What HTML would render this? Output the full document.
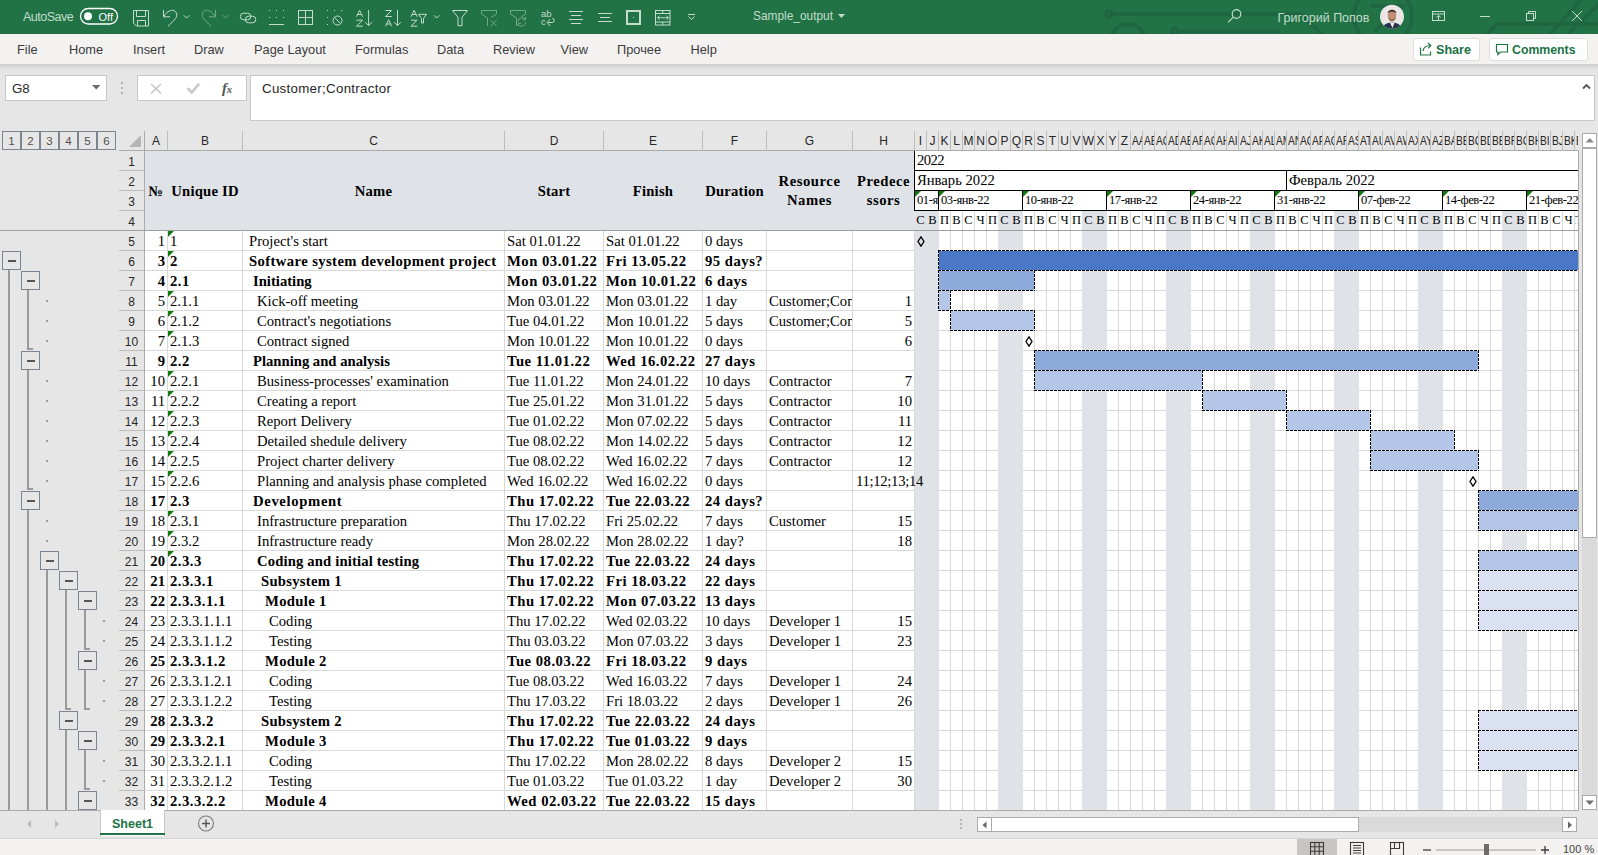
<!DOCTYPE html>
<html><head><meta charset="utf-8"><title>Sample_output - Excel</title>
<style>
html,body{margin:0;padding:0;width:1598px;height:855px;overflow:hidden;background:#e6e6e6;}
body div, body svg{position:absolute;}
.t{white-space:pre;}
</style></head><body>
<div style="left:0px;top:0px;width:1598px;height:34px;background:#217346"></div>
<div style="left:0px;top:34px;width:1598px;height:30px;background:#f3f2f1"></div>
<div style="left:0px;top:64px;width:1598px;height:774px;background:#e6e6e6"></div>
<div style="left:0px;top:64px;width:1598px;height:6px;background:linear-gradient(#cdcdcd,#e6e6e6)"></div>
<div style="left:0px;top:838px;width:1598px;height:17px;background:#f3f2f1;border-top:1px solid #d4d4d4;box-sizing:border-box"></div>
<div class="t" style="left:23px;top:7px;font:12.5px 'Liberation Sans',sans-serif;color:#c0dec9;letter-spacing:-0.5px;line-height:20px;text-align:left">AutoSave</div>
<svg style="position:absolute;left:0;top:0" width="1598" height="34">
<g fill="none" stroke="#1e6540" stroke-width="3.4">
<line x1="1112" y1="14" x2="1290" y2="14"/><circle cx="1109" cy="14" r="3"/>
<circle cx="1128" cy="42" r="18"/>
<circle cx="1175" cy="31.5" r="3"/><line x1="1178" y1="31.5" x2="1280" y2="31.5"/>
<path d="M1290 14 L1300 14 L1322 34"/>
<circle cx="1383" cy="16" r="29"/>
<path d="M1371 6 H1402 L1374 32"/>
<path d="M1497 24 H1598 M1497 24 L1487 34"/>
<line x1="1581" y1="0" x2="1550" y2="34"/><line x1="1600" y1="3" x2="1568" y2="34"/>
</g>
<rect x="80.5" y="8.5" width="37" height="15.5" rx="7.75" fill="none" stroke="#ffffff" stroke-width="1.3"/>
<circle cx="88" cy="16.2" r="4" fill="#ffffff"/>
<g fill="none" stroke="#c3dccb" stroke-width="1">
<!-- save -->
<path d="M133.5 10.5h15v15.5h-12l-3-3z"/><path d="M136.5 10.5v6h9v-6"/><path d="M137.5 26v-5.5h8v5.5"/>
<!-- undo -->
<path d="M163.5 10v6.8h6.5"/><path d="M164 16.5C166 12 170 10.3 172.5 10.3C175 10.3 176.8 12.5 176.8 15C176.8 17.5 175.5 19 168 26.3"/>
<path d="M183.8 15.3l2.7 2.7 2.7-2.7"/>
<!-- link -->
<rect x="240.3" y="13.2" width="10.5" height="6.6" rx="3.3"/><rect x="245.3" y="16.2" width="10.5" height="6.6" rx="3.3"/>
<!-- bottom border -->
<path d="M269 24.5h15"/>
<!-- all borders -->
<rect x="298.5" y="10.5" width="14" height="14"/><path d="M305.5 10.5v14M298.5 17.5h14"/>
<!-- no border -->
<circle cx="337.5" cy="20.5" r="4.5"/><path d="M334.3 17.3l6.4 6.4"/>
<!-- sort AZ -->
<path d="M356.5 16.8L359.6 10.3L362.7 16.8M357.6 14.5h4"/><path d="M356.5 20.2h6L356.5 26.2h6.3"/>
<path d="M368.6 10v15.5M365.2 22.2l3.4 3.4 3.4-3.4"/>
<!-- sort ZA -->
<path d="M385.5 10.5h6L385.5 16.5h6.3"/><path d="M385.5 26.3L388.6 19.8L391.7 26.3M386.6 24h4"/>
<path d="M397.5 10v15.5M394.1 22.2l3.4 3.4 3.4-3.4"/>
<!-- sort filter -->
<path d="M411 16.8L414.1 10.3L417.2 16.8M412.1 14.5h4"/><path d="M411 20.2h6L411 26.2h6.3"/>
<path d="M418.5 14.3h8l-3 4.2v4.5h-2v-4.5z"/>
<path d="M434 15.3l2.7 2.7 2.7-2.7"/>
<!-- filter -->
<path d="M452.5 10.5h15l-5.5 6.8v8.4h-4v-8.4z"/>
<!-- wrap -->
<path d="M548 22.5h4.2a2 2 0 0 0 0-4 M550 26l-2.8-3.5 2.8-3.3" />
<!-- align center -->
<path d="M569 11.5h14M571 15.5h10M569 19.5h14M571 23.5h10"/>
<path d="M598 13.5h14M600 17.5h10M598 21.5h14"/>
<!-- thick box -->
<rect x="627" y="11" width="13" height="13" stroke-width="2"/>
<!-- merge -->
<rect x="655.5" y="10.5" width="14.5" height="14.5"/><path d="M655.5 13.5h14.5M655.5 22h14.5M662.75 10.5v3M662.75 22v3M657.5 17.75h11M659.5 15.7l-2 2.05 2 2.05M666.5 15.7l2 2.05-2 2.05"/>
<path d="M688 14.5h7M688.5 16.5l3 3 3-3"/>
</g>
<g fill="none" stroke="#c3dccb" stroke-width="1" opacity="0.5">
<path d="M215.5 10v6.8h-6.5"/><path d="M215 16.5C213 12 209 10.3 206.5 10.3C204 10.3 202.2 12.5 202.2 15C202.2 17.5 203.5 19 211 26.3"/>
<path d="M222.8 15.3l2.7 2.7 2.7-2.7"/>
<path d="M487.5 26V18L481.5 14V10.5H496.5V14L491 17.5"/><path d="M490.8 20.3l5.7 5.7M496.5 20.3l-5.7 5.7"/>
<path d="M516.5 26V18L510.5 14V10.5H525.5V14L521.5 16.8"/><path d="M518 21.5a4 4 0 0 1 7.3-2M525.5 22.5a4 4 0 0 1-7.3 2M525.5 17v2.7h-2.7M518.2 26v-2.7h2.7"/>
</g>
<g fill="#c3dccb" font-family="Liberation Sans" font-size="9.5">
<text x="541" y="17.3">ab</text><text x="541" y="25.3">c</text>
</g>
<g fill="#c3dccb">
<rect x="269" y="10" width="1" height="1"/><rect x="276" y="10" width="1" height="1"/><rect x="283" y="10" width="1" height="1"/>
<rect x="269" y="17" width="1" height="1"/><rect x="276" y="17" width="1" height="1"/><rect x="283" y="17" width="1" height="1"/>
<rect x="327" y="10" width="1" height="1"/><rect x="334" y="10" width="1" height="1"/><rect x="341" y="10" width="1" height="1"/>
<rect x="327" y="17" width="1" height="1"/><rect x="327" y="24" width="1" height="1"/>
<rect x="633" y="17" width="1" height="1"/>
</g>
<!-- search -->
<g fill="none" stroke="#c3dccb" stroke-width="1.2">
<circle cx="1236.5" cy="14" r="4.3"/><path d="M1233.3 17.2l-5.2 5.2"/>
</g>
<!-- window controls -->
<g fill="none" stroke="#c3dccb" stroke-width="1">
<rect x="1432.5" y="11.5" width="12" height="9"/><path d="M1432.5 14h12M1438.5 20.5v-5M1436.3 17.5l2.2-2.2 2.2 2.2"/>
<path d="M1480 16.5h10"/>
<rect x="1526.5" y="13.5" width="7" height="7"/><path d="M1528.5 13.5v-2h7v7h-2"/>
<path d="M1572 11l10 10M1582 11l-10 10"/>
</g>
<!-- avatar -->
<defs><clipPath id="av"><circle cx="1392" cy="16.8" r="12"/></clipPath></defs>
<circle cx="1392" cy="16.8" r="12" fill="#ebe6e6"/>
<g clip-path="url(#av)">
<path d="M1382 30 C1383 24.5 1386 23 1392 22.5 C1398 23 1401 24.5 1402 30z" fill="#27324d"/>
<path d="M1390 22.8 L1392.5 28 L1394.5 22.8z" fill="#f2f2f2"/>
<ellipse cx="1392" cy="15.8" rx="4.3" ry="6" fill="#c08f78"/>
<path d="M1387.7 13.5 C1387.5 8.5 1396.5 8.5 1396.3 13.5 C1395 11 1389 11 1387.7 13.5z" fill="#4a3426"/>
<path d="M1389 18.5 C1390 20.5 1394 20.5 1395 18.5" fill="none" stroke="#6b4a3a" stroke-width="1"/>
</g>
</svg>
<div class="t" style="left:98.5px;top:6.5px;font:11px 'Liberation Sans',sans-serif;color:#ffffff;line-height:20px;text-align:left">Off</div>
<div class="t" style="left:753px;top:6px;font:11.9px 'Liberation Sans',sans-serif;color:#c3dccb;line-height:20px;text-align:left">Sample_output</div>
<svg style="position:absolute;left:838px;top:14px" width="8" height="5"><path d="M0 0h7l-3.5 4z" fill="#c3dccb"/></svg>
<div class="t" style="left:1277.5px;top:7.5px;font:12.5px 'Liberation Sans',sans-serif;color:#c3dccb;line-height:20px;text-align:left">Григорий Попов</div>
<div class="t" style="left:17px;top:39.5px;font:12.8px 'Liberation Sans',sans-serif;color:#3c3c3c;line-height:20px;text-align:left">File</div>
<div class="t" style="left:69px;top:39.5px;font:12.8px 'Liberation Sans',sans-serif;color:#3c3c3c;line-height:20px;text-align:left">Home</div>
<div class="t" style="left:133px;top:39.5px;font:12.8px 'Liberation Sans',sans-serif;color:#3c3c3c;line-height:20px;text-align:left">Insert</div>
<div class="t" style="left:194px;top:39.5px;font:12.8px 'Liberation Sans',sans-serif;color:#3c3c3c;line-height:20px;text-align:left">Draw</div>
<div class="t" style="left:254px;top:39.5px;font:12.8px 'Liberation Sans',sans-serif;color:#3c3c3c;line-height:20px;text-align:left">Page Layout</div>
<div class="t" style="left:355px;top:39.5px;font:12.8px 'Liberation Sans',sans-serif;color:#3c3c3c;line-height:20px;text-align:left">Formulas</div>
<div class="t" style="left:437px;top:39.5px;font:12.8px 'Liberation Sans',sans-serif;color:#3c3c3c;line-height:20px;text-align:left">Data</div>
<div class="t" style="left:493px;top:39.5px;font:12.8px 'Liberation Sans',sans-serif;color:#3c3c3c;line-height:20px;text-align:left">Review</div>
<div class="t" style="left:560.5px;top:39.5px;font:12.8px 'Liberation Sans',sans-serif;color:#3c3c3c;line-height:20px;text-align:left">View</div>
<div class="t" style="left:617px;top:39.5px;font:12.8px 'Liberation Sans',sans-serif;color:#3c3c3c;line-height:20px;text-align:left">Прочее</div>
<div class="t" style="left:690.5px;top:39.5px;font:12.8px 'Liberation Sans',sans-serif;color:#3c3c3c;line-height:20px;text-align:left">Help</div>
<div style="left:1412.5px;top:38px;width:67px;height:22.5px;background:#fff;border:1px solid #e1dfdd;border-radius:3px;box-sizing:border-box"></div>
<div style="left:1488.5px;top:38px;width:99px;height:22.5px;background:#fff;border:1px solid #e1dfdd;border-radius:3px;box-sizing:border-box"></div>
<svg style="position:absolute;left:1410px;top:36px" width="180" height="26"><g fill="none" stroke="#217346" stroke-width="1.2">
<path d="M10.5 11.5v7.5h10v-3.5"/><path d="M13 15c0.5-3.5 3.2-5.5 7.5-5.5"/><path d="M18 7l2.8 2.5-2.5 2.8"/>
<path d="M86.5 8.5h11v7.5h-7l-2.5 2.5v-2.5h-1.5z"/>
</g></svg>
<div class="t" style="left:1436px;top:39.5px;font:bold 12.6px 'Liberation Sans',sans-serif;color:#217346;line-height:20px;text-align:left">Share</div>
<div class="t" style="left:1512px;top:39.5px;font:bold 12.3px 'Liberation Sans',sans-serif;color:#217346;line-height:20px;text-align:left">Comments</div>
<div style="left:5px;top:75px;width:102px;height:26px;background:#fff;border:1px solid #c8c8c8;box-sizing:border-box"></div>
<div class="t" style="left:12px;top:79px;font:13.3px 'Liberation Sans',sans-serif;color:#262626;line-height:20px;text-align:left">G8</div>
<svg style="position:absolute;left:92px;top:85px" width="10" height="6"><path d="M0 0h8.5l-4.25 4.5z" fill="#6b6b6b"/></svg>
<svg style="position:absolute;left:120px;top:81px" width="4" height="14"><circle cx="2" cy="2" r="1" fill="#a0a0a0"/><circle cx="2" cy="7" r="1" fill="#a0a0a0"/><circle cx="2" cy="12" r="1" fill="#a0a0a0"/></svg>
<div style="left:137px;top:75px;width:110px;height:26px;background:#fff;border:1px solid #c8c8c8;box-sizing:border-box"></div>
<svg style="position:absolute;left:137px;top:75px" width="110" height="26"><g fill="none" stroke="#b4b4b4" stroke-width="1.3">
<path d="M14 9l10 9.5M24 9l-10 9.5" stroke="#c4c4c4" stroke-width="1.4"/><path d="M50.5 13.2l4.2 4.3 7.5-8.8" stroke="#c8c8c8" stroke-width="2.6"/></g>
<text x="85" y="17.8" font-family="Liberation Serif" font-style="italic" font-weight="bold" font-size="15" fill="#555">f</text><text x="89.8" y="17.8" font-family="Liberation Serif" font-style="italic" font-size="10.5" font-weight="bold" fill="#555">x</text></svg>
<div style="left:250px;top:75px;width:1345px;height:46px;background:#fff;border:1px solid #c8c8c8;box-sizing:border-box"></div>
<div class="t" style="left:262px;top:79px;font:13.3px 'Liberation Sans',sans-serif;color:#262626;letter-spacing:0.3px;line-height:20px;text-align:left">Customer;Contractor</div>
<svg style="position:absolute;left:1582px;top:83px" width="10" height="7"><path d="M1 5.5l3.5-3.5 3.5 3.5" fill="none" stroke="#555" stroke-width="1.8"/></svg>
<div style="left:145px;top:151px;width:1433px;height:659px;background:#fff"></div>
<div style="left:145px;top:151px;width:769px;height:79px;background:#dfe3e8"></div>
<div style="left:914px;top:211px;width:25px;height:599px;background:#dfe3e8"></div>
<div style="left:998px;top:211px;width:25px;height:599px;background:#dfe3e8"></div>
<div style="left:1082px;top:211px;width:25px;height:599px;background:#dfe3e8"></div>
<div style="left:1166px;top:211px;width:25px;height:599px;background:#dfe3e8"></div>
<div style="left:1250px;top:211px;width:25px;height:599px;background:#dfe3e8"></div>
<div style="left:1334px;top:211px;width:25px;height:599px;background:#dfe3e8"></div>
<div style="left:1418px;top:211px;width:25px;height:599px;background:#dfe3e8"></div>
<div style="left:1502px;top:211px;width:25px;height:599px;background:#dfe3e8"></div>
<div style="left:950px;top:211px;width:1px;height:599px;background:#d9d9d9"></div>
<div style="left:962px;top:211px;width:1px;height:599px;background:#d9d9d9"></div>
<div style="left:974px;top:211px;width:1px;height:599px;background:#d9d9d9"></div>
<div style="left:986px;top:211px;width:1px;height:599px;background:#d9d9d9"></div>
<div style="left:1034px;top:211px;width:1px;height:599px;background:#d9d9d9"></div>
<div style="left:1046px;top:211px;width:1px;height:599px;background:#d9d9d9"></div>
<div style="left:1058px;top:211px;width:1px;height:599px;background:#d9d9d9"></div>
<div style="left:1070px;top:211px;width:1px;height:599px;background:#d9d9d9"></div>
<div style="left:1118px;top:211px;width:1px;height:599px;background:#d9d9d9"></div>
<div style="left:1130px;top:211px;width:1px;height:599px;background:#d9d9d9"></div>
<div style="left:1142px;top:211px;width:1px;height:599px;background:#d9d9d9"></div>
<div style="left:1154px;top:211px;width:1px;height:599px;background:#d9d9d9"></div>
<div style="left:1202px;top:211px;width:1px;height:599px;background:#d9d9d9"></div>
<div style="left:1214px;top:211px;width:1px;height:599px;background:#d9d9d9"></div>
<div style="left:1226px;top:211px;width:1px;height:599px;background:#d9d9d9"></div>
<div style="left:1238px;top:211px;width:1px;height:599px;background:#d9d9d9"></div>
<div style="left:1286px;top:211px;width:1px;height:599px;background:#d9d9d9"></div>
<div style="left:1298px;top:211px;width:1px;height:599px;background:#d9d9d9"></div>
<div style="left:1310px;top:211px;width:1px;height:599px;background:#d9d9d9"></div>
<div style="left:1322px;top:211px;width:1px;height:599px;background:#d9d9d9"></div>
<div style="left:1370px;top:211px;width:1px;height:599px;background:#d9d9d9"></div>
<div style="left:1382px;top:211px;width:1px;height:599px;background:#d9d9d9"></div>
<div style="left:1394px;top:211px;width:1px;height:599px;background:#d9d9d9"></div>
<div style="left:1406px;top:211px;width:1px;height:599px;background:#d9d9d9"></div>
<div style="left:1454px;top:211px;width:1px;height:599px;background:#d9d9d9"></div>
<div style="left:1466px;top:211px;width:1px;height:599px;background:#d9d9d9"></div>
<div style="left:1478px;top:211px;width:1px;height:599px;background:#d9d9d9"></div>
<div style="left:1490px;top:211px;width:1px;height:599px;background:#d9d9d9"></div>
<div style="left:1538px;top:211px;width:1px;height:599px;background:#d9d9d9"></div>
<div style="left:1550px;top:211px;width:1px;height:599px;background:#d9d9d9"></div>
<div style="left:1562px;top:211px;width:1px;height:599px;background:#d9d9d9"></div>
<div style="left:1574px;top:211px;width:1px;height:599px;background:#d9d9d9"></div>
<div style="left:145px;top:250px;width:1433px;height:1px;background:#d9d9d9"></div>
<div style="left:145px;top:270px;width:1433px;height:1px;background:#d9d9d9"></div>
<div style="left:145px;top:290px;width:1433px;height:1px;background:#d9d9d9"></div>
<div style="left:145px;top:310px;width:1433px;height:1px;background:#d9d9d9"></div>
<div style="left:145px;top:330px;width:1433px;height:1px;background:#d9d9d9"></div>
<div style="left:145px;top:350px;width:1433px;height:1px;background:#d9d9d9"></div>
<div style="left:145px;top:370px;width:1433px;height:1px;background:#d9d9d9"></div>
<div style="left:145px;top:390px;width:1433px;height:1px;background:#d9d9d9"></div>
<div style="left:145px;top:410px;width:1433px;height:1px;background:#d9d9d9"></div>
<div style="left:145px;top:430px;width:1433px;height:1px;background:#d9d9d9"></div>
<div style="left:145px;top:450px;width:1433px;height:1px;background:#d9d9d9"></div>
<div style="left:145px;top:470px;width:1433px;height:1px;background:#d9d9d9"></div>
<div style="left:145px;top:490px;width:1433px;height:1px;background:#d9d9d9"></div>
<div style="left:145px;top:510px;width:1433px;height:1px;background:#d9d9d9"></div>
<div style="left:145px;top:530px;width:1433px;height:1px;background:#d9d9d9"></div>
<div style="left:145px;top:550px;width:1433px;height:1px;background:#d9d9d9"></div>
<div style="left:145px;top:570px;width:1433px;height:1px;background:#d9d9d9"></div>
<div style="left:145px;top:590px;width:1433px;height:1px;background:#d9d9d9"></div>
<div style="left:145px;top:610px;width:1433px;height:1px;background:#d9d9d9"></div>
<div style="left:145px;top:630px;width:1433px;height:1px;background:#d9d9d9"></div>
<div style="left:145px;top:650px;width:1433px;height:1px;background:#d9d9d9"></div>
<div style="left:145px;top:670px;width:1433px;height:1px;background:#d9d9d9"></div>
<div style="left:145px;top:690px;width:1433px;height:1px;background:#d9d9d9"></div>
<div style="left:145px;top:710px;width:1433px;height:1px;background:#d9d9d9"></div>
<div style="left:145px;top:730px;width:1433px;height:1px;background:#d9d9d9"></div>
<div style="left:145px;top:750px;width:1433px;height:1px;background:#d9d9d9"></div>
<div style="left:145px;top:770px;width:1433px;height:1px;background:#d9d9d9"></div>
<div style="left:145px;top:790px;width:1433px;height:1px;background:#d9d9d9"></div>
<div style="left:914px;top:211px;width:25px;height:599px;background:#dfe3e8"></div>
<div style="left:998px;top:211px;width:25px;height:599px;background:#dfe3e8"></div>
<div style="left:1082px;top:211px;width:25px;height:599px;background:#dfe3e8"></div>
<div style="left:1166px;top:211px;width:25px;height:599px;background:#dfe3e8"></div>
<div style="left:1250px;top:211px;width:25px;height:599px;background:#dfe3e8"></div>
<div style="left:1334px;top:211px;width:25px;height:599px;background:#dfe3e8"></div>
<div style="left:1418px;top:211px;width:25px;height:599px;background:#dfe3e8"></div>
<div style="left:1502px;top:211px;width:25px;height:599px;background:#dfe3e8"></div>
<div style="left:167px;top:231px;width:1px;height:579px;background:#d9d9d9"></div>
<div style="left:242px;top:231px;width:1px;height:579px;background:#d9d9d9"></div>
<div style="left:504px;top:231px;width:1px;height:579px;background:#d9d9d9"></div>
<div style="left:603px;top:231px;width:1px;height:579px;background:#d9d9d9"></div>
<div style="left:702px;top:231px;width:1px;height:579px;background:#d9d9d9"></div>
<div style="left:766px;top:231px;width:1px;height:579px;background:#d9d9d9"></div>
<div style="left:852px;top:231px;width:1px;height:579px;background:#d9d9d9"></div>
<div style="left:914px;top:231px;width:1px;height:579px;background:#d9d9d9"></div>
<div style="left:119px;top:131px;width:1459px;height:20px;background:#e6e6e6"></div>
<div style="left:119px;top:150px;width:1459px;height:1px;background:#ababab"></div>
<div style="left:144px;top:131px;width:1px;height:19px;background:#bdbdbd"></div>
<div style="left:167px;top:131px;width:1px;height:19px;background:#bdbdbd"></div>
<div style="left:242px;top:131px;width:1px;height:19px;background:#bdbdbd"></div>
<div style="left:504px;top:131px;width:1px;height:19px;background:#bdbdbd"></div>
<div style="left:603px;top:131px;width:1px;height:19px;background:#bdbdbd"></div>
<div style="left:702px;top:131px;width:1px;height:19px;background:#bdbdbd"></div>
<div style="left:766px;top:131px;width:1px;height:19px;background:#bdbdbd"></div>
<div style="left:852px;top:131px;width:1px;height:19px;background:#bdbdbd"></div>
<div style="left:914px;top:131px;width:1px;height:19px;background:#bdbdbd"></div>
<div style="left:926px;top:131px;width:1px;height:19px;background:#bdbdbd"></div>
<div style="left:938px;top:131px;width:1px;height:19px;background:#bdbdbd"></div>
<div style="left:950px;top:131px;width:1px;height:19px;background:#bdbdbd"></div>
<div style="left:962px;top:131px;width:1px;height:19px;background:#bdbdbd"></div>
<div style="left:974px;top:131px;width:1px;height:19px;background:#bdbdbd"></div>
<div style="left:986px;top:131px;width:1px;height:19px;background:#bdbdbd"></div>
<div style="left:998px;top:131px;width:1px;height:19px;background:#bdbdbd"></div>
<div style="left:1010px;top:131px;width:1px;height:19px;background:#bdbdbd"></div>
<div style="left:1022px;top:131px;width:1px;height:19px;background:#bdbdbd"></div>
<div style="left:1034px;top:131px;width:1px;height:19px;background:#bdbdbd"></div>
<div style="left:1046px;top:131px;width:1px;height:19px;background:#bdbdbd"></div>
<div style="left:1058px;top:131px;width:1px;height:19px;background:#bdbdbd"></div>
<div style="left:1070px;top:131px;width:1px;height:19px;background:#bdbdbd"></div>
<div style="left:1082px;top:131px;width:1px;height:19px;background:#bdbdbd"></div>
<div style="left:1094px;top:131px;width:1px;height:19px;background:#bdbdbd"></div>
<div style="left:1106px;top:131px;width:1px;height:19px;background:#bdbdbd"></div>
<div style="left:1118px;top:131px;width:1px;height:19px;background:#bdbdbd"></div>
<div style="left:1130px;top:131px;width:1px;height:19px;background:#bdbdbd"></div>
<div style="left:1142px;top:131px;width:1px;height:19px;background:#bdbdbd"></div>
<div style="left:1154px;top:131px;width:1px;height:19px;background:#bdbdbd"></div>
<div style="left:1166px;top:131px;width:1px;height:19px;background:#bdbdbd"></div>
<div style="left:1178px;top:131px;width:1px;height:19px;background:#bdbdbd"></div>
<div style="left:1190px;top:131px;width:1px;height:19px;background:#bdbdbd"></div>
<div style="left:1202px;top:131px;width:1px;height:19px;background:#bdbdbd"></div>
<div style="left:1214px;top:131px;width:1px;height:19px;background:#bdbdbd"></div>
<div style="left:1226px;top:131px;width:1px;height:19px;background:#bdbdbd"></div>
<div style="left:1238px;top:131px;width:1px;height:19px;background:#bdbdbd"></div>
<div style="left:1250px;top:131px;width:1px;height:19px;background:#bdbdbd"></div>
<div style="left:1262px;top:131px;width:1px;height:19px;background:#bdbdbd"></div>
<div style="left:1274px;top:131px;width:1px;height:19px;background:#bdbdbd"></div>
<div style="left:1286px;top:131px;width:1px;height:19px;background:#bdbdbd"></div>
<div style="left:1298px;top:131px;width:1px;height:19px;background:#bdbdbd"></div>
<div style="left:1310px;top:131px;width:1px;height:19px;background:#bdbdbd"></div>
<div style="left:1322px;top:131px;width:1px;height:19px;background:#bdbdbd"></div>
<div style="left:1334px;top:131px;width:1px;height:19px;background:#bdbdbd"></div>
<div style="left:1346px;top:131px;width:1px;height:19px;background:#bdbdbd"></div>
<div style="left:1358px;top:131px;width:1px;height:19px;background:#bdbdbd"></div>
<div style="left:1370px;top:131px;width:1px;height:19px;background:#bdbdbd"></div>
<div style="left:1382px;top:131px;width:1px;height:19px;background:#bdbdbd"></div>
<div style="left:1394px;top:131px;width:1px;height:19px;background:#bdbdbd"></div>
<div style="left:1406px;top:131px;width:1px;height:19px;background:#bdbdbd"></div>
<div style="left:1418px;top:131px;width:1px;height:19px;background:#bdbdbd"></div>
<div style="left:1430px;top:131px;width:1px;height:19px;background:#bdbdbd"></div>
<div style="left:1442px;top:131px;width:1px;height:19px;background:#bdbdbd"></div>
<div style="left:1454px;top:131px;width:1px;height:19px;background:#bdbdbd"></div>
<div style="left:1466px;top:131px;width:1px;height:19px;background:#bdbdbd"></div>
<div style="left:1478px;top:131px;width:1px;height:19px;background:#bdbdbd"></div>
<div style="left:1490px;top:131px;width:1px;height:19px;background:#bdbdbd"></div>
<div style="left:1502px;top:131px;width:1px;height:19px;background:#bdbdbd"></div>
<div style="left:1514px;top:131px;width:1px;height:19px;background:#bdbdbd"></div>
<div style="left:1526px;top:131px;width:1px;height:19px;background:#bdbdbd"></div>
<div style="left:1538px;top:131px;width:1px;height:19px;background:#bdbdbd"></div>
<div style="left:1550px;top:131px;width:1px;height:19px;background:#bdbdbd"></div>
<div style="left:1562px;top:131px;width:1px;height:19px;background:#bdbdbd"></div>
<div style="left:1574px;top:131px;width:1px;height:19px;background:#bdbdbd"></div>
<svg style="position:absolute;left:128px;top:134px" width="14" height="14"><path d="M13 1V13H1z" fill="#b5b5b5"/></svg>
<div class="t" style="left:145px;top:131px;width:22px;font:12px 'Liberation Sans',sans-serif;color:#262626;line-height:20px;text-align:center">A</div>
<div class="t" style="left:168px;top:131px;width:74px;font:12px 'Liberation Sans',sans-serif;color:#262626;line-height:20px;text-align:center">B</div>
<div class="t" style="left:243px;top:131px;width:261px;font:12px 'Liberation Sans',sans-serif;color:#262626;line-height:20px;text-align:center">C</div>
<div class="t" style="left:505px;top:131px;width:98px;font:12px 'Liberation Sans',sans-serif;color:#262626;line-height:20px;text-align:center">D</div>
<div class="t" style="left:604px;top:131px;width:98px;font:12px 'Liberation Sans',sans-serif;color:#262626;line-height:20px;text-align:center">E</div>
<div class="t" style="left:703px;top:131px;width:63px;font:12px 'Liberation Sans',sans-serif;color:#262626;line-height:20px;text-align:center">F</div>
<div class="t" style="left:767px;top:131px;width:85px;font:12px 'Liberation Sans',sans-serif;color:#262626;line-height:20px;text-align:center">G</div>
<div class="t" style="left:853px;top:131px;width:61px;font:12px 'Liberation Sans',sans-serif;color:#262626;line-height:20px;text-align:center">H</div>
<div class="t" style="left:915px;top:131px;width:11px;height:19px;overflow:hidden;line-height:20px;"><div style="position:absolute;left:50%;transform:translateX(-50%);top:0;font:12px Liberation Sans,sans-serif;line-height:20px;color:#262626;white-space:nowrap">I</div></div>
<div class="t" style="left:927px;top:131px;width:11px;height:19px;overflow:hidden;line-height:20px;"><div style="position:absolute;left:50%;transform:translateX(-50%);top:0;font:12px Liberation Sans,sans-serif;line-height:20px;color:#262626;white-space:nowrap">J</div></div>
<div class="t" style="left:939px;top:131px;width:11px;height:19px;overflow:hidden;line-height:20px;"><div style="position:absolute;left:50%;transform:translateX(-50%);top:0;font:12px Liberation Sans,sans-serif;line-height:20px;color:#262626;white-space:nowrap">K</div></div>
<div class="t" style="left:951px;top:131px;width:11px;height:19px;overflow:hidden;line-height:20px;"><div style="position:absolute;left:50%;transform:translateX(-50%);top:0;font:12px Liberation Sans,sans-serif;line-height:20px;color:#262626;white-space:nowrap">L</div></div>
<div class="t" style="left:963px;top:131px;width:11px;height:19px;overflow:hidden;line-height:20px;"><div style="position:absolute;left:50%;transform:translateX(-50%);top:0;font:12px Liberation Sans,sans-serif;line-height:20px;color:#262626;white-space:nowrap">M</div></div>
<div class="t" style="left:975px;top:131px;width:11px;height:19px;overflow:hidden;line-height:20px;"><div style="position:absolute;left:50%;transform:translateX(-50%);top:0;font:12px Liberation Sans,sans-serif;line-height:20px;color:#262626;white-space:nowrap">N</div></div>
<div class="t" style="left:987px;top:131px;width:11px;height:19px;overflow:hidden;line-height:20px;"><div style="position:absolute;left:50%;transform:translateX(-50%);top:0;font:12px Liberation Sans,sans-serif;line-height:20px;color:#262626;white-space:nowrap">O</div></div>
<div class="t" style="left:999px;top:131px;width:11px;height:19px;overflow:hidden;line-height:20px;"><div style="position:absolute;left:50%;transform:translateX(-50%);top:0;font:12px Liberation Sans,sans-serif;line-height:20px;color:#262626;white-space:nowrap">P</div></div>
<div class="t" style="left:1011px;top:131px;width:11px;height:19px;overflow:hidden;line-height:20px;"><div style="position:absolute;left:50%;transform:translateX(-50%);top:0;font:12px Liberation Sans,sans-serif;line-height:20px;color:#262626;white-space:nowrap">Q</div></div>
<div class="t" style="left:1023px;top:131px;width:11px;height:19px;overflow:hidden;line-height:20px;"><div style="position:absolute;left:50%;transform:translateX(-50%);top:0;font:12px Liberation Sans,sans-serif;line-height:20px;color:#262626;white-space:nowrap">R</div></div>
<div class="t" style="left:1035px;top:131px;width:11px;height:19px;overflow:hidden;line-height:20px;"><div style="position:absolute;left:50%;transform:translateX(-50%);top:0;font:12px Liberation Sans,sans-serif;line-height:20px;color:#262626;white-space:nowrap">S</div></div>
<div class="t" style="left:1047px;top:131px;width:11px;height:19px;overflow:hidden;line-height:20px;"><div style="position:absolute;left:50%;transform:translateX(-50%);top:0;font:12px Liberation Sans,sans-serif;line-height:20px;color:#262626;white-space:nowrap">T</div></div>
<div class="t" style="left:1059px;top:131px;width:11px;height:19px;overflow:hidden;line-height:20px;"><div style="position:absolute;left:50%;transform:translateX(-50%);top:0;font:12px Liberation Sans,sans-serif;line-height:20px;color:#262626;white-space:nowrap">U</div></div>
<div class="t" style="left:1071px;top:131px;width:11px;height:19px;overflow:hidden;line-height:20px;"><div style="position:absolute;left:50%;transform:translateX(-50%);top:0;font:12px Liberation Sans,sans-serif;line-height:20px;color:#262626;white-space:nowrap">V</div></div>
<div class="t" style="left:1083px;top:131px;width:11px;height:19px;overflow:hidden;line-height:20px;"><div style="position:absolute;left:50%;transform:translateX(-50%);top:0;font:12px Liberation Sans,sans-serif;line-height:20px;color:#262626;white-space:nowrap">W</div></div>
<div class="t" style="left:1095px;top:131px;width:11px;height:19px;overflow:hidden;line-height:20px;"><div style="position:absolute;left:50%;transform:translateX(-50%);top:0;font:12px Liberation Sans,sans-serif;line-height:20px;color:#262626;white-space:nowrap">X</div></div>
<div class="t" style="left:1107px;top:131px;width:11px;height:19px;overflow:hidden;line-height:20px;"><div style="position:absolute;left:50%;transform:translateX(-50%);top:0;font:12px Liberation Sans,sans-serif;line-height:20px;color:#262626;white-space:nowrap">Y</div></div>
<div class="t" style="left:1119px;top:131px;width:11px;height:19px;overflow:hidden;line-height:20px;"><div style="position:absolute;left:50%;transform:translateX(-50%);top:0;font:12px Liberation Sans,sans-serif;line-height:20px;color:#262626;white-space:nowrap">Z</div></div>
<div class="t" style="left:1131px;top:131px;width:11px;height:19px;overflow:hidden;line-height:20px;"><div style="position:absolute;left:1px;transform:scaleX(0.85);transform-origin:0 0;top:0;font:12px Liberation Sans,sans-serif;line-height:20px;color:#262626;white-space:nowrap">AA</div></div>
<div class="t" style="left:1143px;top:131px;width:11px;height:19px;overflow:hidden;line-height:20px;"><div style="position:absolute;left:1px;transform:scaleX(0.85);transform-origin:0 0;top:0;font:12px Liberation Sans,sans-serif;line-height:20px;color:#262626;white-space:nowrap">AB</div></div>
<div class="t" style="left:1155px;top:131px;width:11px;height:19px;overflow:hidden;line-height:20px;"><div style="position:absolute;left:1px;transform:scaleX(0.85);transform-origin:0 0;top:0;font:12px Liberation Sans,sans-serif;line-height:20px;color:#262626;white-space:nowrap">AC</div></div>
<div class="t" style="left:1167px;top:131px;width:11px;height:19px;overflow:hidden;line-height:20px;"><div style="position:absolute;left:1px;transform:scaleX(0.85);transform-origin:0 0;top:0;font:12px Liberation Sans,sans-serif;line-height:20px;color:#262626;white-space:nowrap">AD</div></div>
<div class="t" style="left:1179px;top:131px;width:11px;height:19px;overflow:hidden;line-height:20px;"><div style="position:absolute;left:1px;transform:scaleX(0.85);transform-origin:0 0;top:0;font:12px Liberation Sans,sans-serif;line-height:20px;color:#262626;white-space:nowrap">AE</div></div>
<div class="t" style="left:1191px;top:131px;width:11px;height:19px;overflow:hidden;line-height:20px;"><div style="position:absolute;left:1px;transform:scaleX(0.85);transform-origin:0 0;top:0;font:12px Liberation Sans,sans-serif;line-height:20px;color:#262626;white-space:nowrap">AF</div></div>
<div class="t" style="left:1203px;top:131px;width:11px;height:19px;overflow:hidden;line-height:20px;"><div style="position:absolute;left:1px;transform:scaleX(0.85);transform-origin:0 0;top:0;font:12px Liberation Sans,sans-serif;line-height:20px;color:#262626;white-space:nowrap">AG</div></div>
<div class="t" style="left:1215px;top:131px;width:11px;height:19px;overflow:hidden;line-height:20px;"><div style="position:absolute;left:1px;transform:scaleX(0.85);transform-origin:0 0;top:0;font:12px Liberation Sans,sans-serif;line-height:20px;color:#262626;white-space:nowrap">AH</div></div>
<div class="t" style="left:1227px;top:131px;width:11px;height:19px;overflow:hidden;line-height:20px;"><div style="position:absolute;left:1px;transform:scaleX(0.85);transform-origin:0 0;top:0;font:12px Liberation Sans,sans-serif;line-height:20px;color:#262626;white-space:nowrap">AI</div></div>
<div class="t" style="left:1239px;top:131px;width:11px;height:19px;overflow:hidden;line-height:20px;"><div style="position:absolute;left:1px;transform:scaleX(0.85);transform-origin:0 0;top:0;font:12px Liberation Sans,sans-serif;line-height:20px;color:#262626;white-space:nowrap">AJ</div></div>
<div class="t" style="left:1251px;top:131px;width:11px;height:19px;overflow:hidden;line-height:20px;"><div style="position:absolute;left:1px;transform:scaleX(0.85);transform-origin:0 0;top:0;font:12px Liberation Sans,sans-serif;line-height:20px;color:#262626;white-space:nowrap">AK</div></div>
<div class="t" style="left:1263px;top:131px;width:11px;height:19px;overflow:hidden;line-height:20px;"><div style="position:absolute;left:1px;transform:scaleX(0.85);transform-origin:0 0;top:0;font:12px Liberation Sans,sans-serif;line-height:20px;color:#262626;white-space:nowrap">AL</div></div>
<div class="t" style="left:1275px;top:131px;width:11px;height:19px;overflow:hidden;line-height:20px;"><div style="position:absolute;left:1px;transform:scaleX(0.85);transform-origin:0 0;top:0;font:12px Liberation Sans,sans-serif;line-height:20px;color:#262626;white-space:nowrap">AM</div></div>
<div class="t" style="left:1287px;top:131px;width:11px;height:19px;overflow:hidden;line-height:20px;"><div style="position:absolute;left:1px;transform:scaleX(0.85);transform-origin:0 0;top:0;font:12px Liberation Sans,sans-serif;line-height:20px;color:#262626;white-space:nowrap">AN</div></div>
<div class="t" style="left:1299px;top:131px;width:11px;height:19px;overflow:hidden;line-height:20px;"><div style="position:absolute;left:1px;transform:scaleX(0.85);transform-origin:0 0;top:0;font:12px Liberation Sans,sans-serif;line-height:20px;color:#262626;white-space:nowrap">AO</div></div>
<div class="t" style="left:1311px;top:131px;width:11px;height:19px;overflow:hidden;line-height:20px;"><div style="position:absolute;left:1px;transform:scaleX(0.85);transform-origin:0 0;top:0;font:12px Liberation Sans,sans-serif;line-height:20px;color:#262626;white-space:nowrap">AP</div></div>
<div class="t" style="left:1323px;top:131px;width:11px;height:19px;overflow:hidden;line-height:20px;"><div style="position:absolute;left:1px;transform:scaleX(0.85);transform-origin:0 0;top:0;font:12px Liberation Sans,sans-serif;line-height:20px;color:#262626;white-space:nowrap">AQ</div></div>
<div class="t" style="left:1335px;top:131px;width:11px;height:19px;overflow:hidden;line-height:20px;"><div style="position:absolute;left:1px;transform:scaleX(0.85);transform-origin:0 0;top:0;font:12px Liberation Sans,sans-serif;line-height:20px;color:#262626;white-space:nowrap">AR</div></div>
<div class="t" style="left:1347px;top:131px;width:11px;height:19px;overflow:hidden;line-height:20px;"><div style="position:absolute;left:1px;transform:scaleX(0.85);transform-origin:0 0;top:0;font:12px Liberation Sans,sans-serif;line-height:20px;color:#262626;white-space:nowrap">AS</div></div>
<div class="t" style="left:1359px;top:131px;width:11px;height:19px;overflow:hidden;line-height:20px;"><div style="position:absolute;left:1px;transform:scaleX(0.85);transform-origin:0 0;top:0;font:12px Liberation Sans,sans-serif;line-height:20px;color:#262626;white-space:nowrap">AT</div></div>
<div class="t" style="left:1371px;top:131px;width:11px;height:19px;overflow:hidden;line-height:20px;"><div style="position:absolute;left:1px;transform:scaleX(0.85);transform-origin:0 0;top:0;font:12px Liberation Sans,sans-serif;line-height:20px;color:#262626;white-space:nowrap">AU</div></div>
<div class="t" style="left:1383px;top:131px;width:11px;height:19px;overflow:hidden;line-height:20px;"><div style="position:absolute;left:1px;transform:scaleX(0.85);transform-origin:0 0;top:0;font:12px Liberation Sans,sans-serif;line-height:20px;color:#262626;white-space:nowrap">AV</div></div>
<div class="t" style="left:1395px;top:131px;width:11px;height:19px;overflow:hidden;line-height:20px;"><div style="position:absolute;left:1px;transform:scaleX(0.85);transform-origin:0 0;top:0;font:12px Liberation Sans,sans-serif;line-height:20px;color:#262626;white-space:nowrap">AW</div></div>
<div class="t" style="left:1407px;top:131px;width:11px;height:19px;overflow:hidden;line-height:20px;"><div style="position:absolute;left:1px;transform:scaleX(0.85);transform-origin:0 0;top:0;font:12px Liberation Sans,sans-serif;line-height:20px;color:#262626;white-space:nowrap">AX</div></div>
<div class="t" style="left:1419px;top:131px;width:11px;height:19px;overflow:hidden;line-height:20px;"><div style="position:absolute;left:1px;transform:scaleX(0.85);transform-origin:0 0;top:0;font:12px Liberation Sans,sans-serif;line-height:20px;color:#262626;white-space:nowrap">AY</div></div>
<div class="t" style="left:1431px;top:131px;width:11px;height:19px;overflow:hidden;line-height:20px;"><div style="position:absolute;left:1px;transform:scaleX(0.85);transform-origin:0 0;top:0;font:12px Liberation Sans,sans-serif;line-height:20px;color:#262626;white-space:nowrap">AZ</div></div>
<div class="t" style="left:1443px;top:131px;width:11px;height:19px;overflow:hidden;line-height:20px;"><div style="position:absolute;left:1px;transform:scaleX(0.85);transform-origin:0 0;top:0;font:12px Liberation Sans,sans-serif;line-height:20px;color:#262626;white-space:nowrap">BA</div></div>
<div class="t" style="left:1455px;top:131px;width:11px;height:19px;overflow:hidden;line-height:20px;"><div style="position:absolute;left:1px;transform:scaleX(0.85);transform-origin:0 0;top:0;font:12px Liberation Sans,sans-serif;line-height:20px;color:#262626;white-space:nowrap">BB</div></div>
<div class="t" style="left:1467px;top:131px;width:11px;height:19px;overflow:hidden;line-height:20px;"><div style="position:absolute;left:1px;transform:scaleX(0.85);transform-origin:0 0;top:0;font:12px Liberation Sans,sans-serif;line-height:20px;color:#262626;white-space:nowrap">BC</div></div>
<div class="t" style="left:1479px;top:131px;width:11px;height:19px;overflow:hidden;line-height:20px;"><div style="position:absolute;left:1px;transform:scaleX(0.85);transform-origin:0 0;top:0;font:12px Liberation Sans,sans-serif;line-height:20px;color:#262626;white-space:nowrap">BD</div></div>
<div class="t" style="left:1491px;top:131px;width:11px;height:19px;overflow:hidden;line-height:20px;"><div style="position:absolute;left:1px;transform:scaleX(0.85);transform-origin:0 0;top:0;font:12px Liberation Sans,sans-serif;line-height:20px;color:#262626;white-space:nowrap">BE</div></div>
<div class="t" style="left:1503px;top:131px;width:11px;height:19px;overflow:hidden;line-height:20px;"><div style="position:absolute;left:1px;transform:scaleX(0.85);transform-origin:0 0;top:0;font:12px Liberation Sans,sans-serif;line-height:20px;color:#262626;white-space:nowrap">BF</div></div>
<div class="t" style="left:1515px;top:131px;width:11px;height:19px;overflow:hidden;line-height:20px;"><div style="position:absolute;left:1px;transform:scaleX(0.85);transform-origin:0 0;top:0;font:12px Liberation Sans,sans-serif;line-height:20px;color:#262626;white-space:nowrap">BG</div></div>
<div class="t" style="left:1527px;top:131px;width:11px;height:19px;overflow:hidden;line-height:20px;"><div style="position:absolute;left:1px;transform:scaleX(0.85);transform-origin:0 0;top:0;font:12px Liberation Sans,sans-serif;line-height:20px;color:#262626;white-space:nowrap">BH</div></div>
<div class="t" style="left:1539px;top:131px;width:11px;height:19px;overflow:hidden;line-height:20px;"><div style="position:absolute;left:1px;transform:scaleX(0.85);transform-origin:0 0;top:0;font:12px Liberation Sans,sans-serif;line-height:20px;color:#262626;white-space:nowrap">BI</div></div>
<div class="t" style="left:1551px;top:131px;width:11px;height:19px;overflow:hidden;line-height:20px;"><div style="position:absolute;left:1px;transform:scaleX(0.85);transform-origin:0 0;top:0;font:12px Liberation Sans,sans-serif;line-height:20px;color:#262626;white-space:nowrap">BJ</div></div>
<div class="t" style="left:1563px;top:131px;width:11px;height:19px;overflow:hidden;line-height:20px;"><div style="position:absolute;left:1px;transform:scaleX(0.85);transform-origin:0 0;top:0;font:12px Liberation Sans,sans-serif;line-height:20px;color:#262626;white-space:nowrap">BK</div></div>
<div class="t" style="left:1575px;top:131px;width:3px;height:19px;overflow:hidden;line-height:20px;"><div style="position:absolute;left:1px;transform:scaleX(0.85);transform-origin:0 0;top:0;font:12px Liberation Sans,sans-serif;line-height:20px;color:#262626;white-space:nowrap">BL</div></div>
<div style="left:119px;top:151px;width:26px;height:659px;background:#e6e6e6"></div>
<div style="left:144px;top:131px;width:1px;height:679px;background:#ababab"></div>
<div style="left:119px;top:170px;width:25px;height:1px;background:#bdbdbd"></div>
<div class="t" style="left:119px;top:152px;width:25px;font:12px 'Liberation Sans',sans-serif;color:#262626;line-height:20px;text-align:center">1</div>
<div style="left:119px;top:190px;width:25px;height:1px;background:#bdbdbd"></div>
<div class="t" style="left:119px;top:172px;width:25px;font:12px 'Liberation Sans',sans-serif;color:#262626;line-height:20px;text-align:center">2</div>
<div style="left:119px;top:210px;width:25px;height:1px;background:#bdbdbd"></div>
<div class="t" style="left:119px;top:192px;width:25px;font:12px 'Liberation Sans',sans-serif;color:#262626;line-height:20px;text-align:center">3</div>
<div class="t" style="left:119px;top:212px;width:25px;font:12px 'Liberation Sans',sans-serif;color:#262626;line-height:20px;text-align:center">4</div>
<div style="left:119px;top:250px;width:25px;height:1px;background:#bdbdbd"></div>
<div class="t" style="left:119px;top:232px;width:25px;font:12px 'Liberation Sans',sans-serif;color:#262626;line-height:20px;text-align:center">5</div>
<div style="left:119px;top:270px;width:25px;height:1px;background:#bdbdbd"></div>
<div class="t" style="left:119px;top:252px;width:25px;font:12px 'Liberation Sans',sans-serif;color:#262626;line-height:20px;text-align:center">6</div>
<div style="left:119px;top:290px;width:25px;height:1px;background:#bdbdbd"></div>
<div class="t" style="left:119px;top:272px;width:25px;font:12px 'Liberation Sans',sans-serif;color:#262626;line-height:20px;text-align:center">7</div>
<div style="left:119px;top:310px;width:25px;height:1px;background:#bdbdbd"></div>
<div class="t" style="left:119px;top:292px;width:25px;font:12px 'Liberation Sans',sans-serif;color:#262626;line-height:20px;text-align:center">8</div>
<div style="left:119px;top:330px;width:25px;height:1px;background:#bdbdbd"></div>
<div class="t" style="left:119px;top:312px;width:25px;font:12px 'Liberation Sans',sans-serif;color:#262626;line-height:20px;text-align:center">9</div>
<div style="left:119px;top:350px;width:25px;height:1px;background:#bdbdbd"></div>
<div class="t" style="left:119px;top:332px;width:25px;font:12px 'Liberation Sans',sans-serif;color:#262626;line-height:20px;text-align:center">10</div>
<div style="left:119px;top:370px;width:25px;height:1px;background:#bdbdbd"></div>
<div class="t" style="left:119px;top:352px;width:25px;font:12px 'Liberation Sans',sans-serif;color:#262626;line-height:20px;text-align:center">11</div>
<div style="left:119px;top:390px;width:25px;height:1px;background:#bdbdbd"></div>
<div class="t" style="left:119px;top:372px;width:25px;font:12px 'Liberation Sans',sans-serif;color:#262626;line-height:20px;text-align:center">12</div>
<div style="left:119px;top:410px;width:25px;height:1px;background:#bdbdbd"></div>
<div class="t" style="left:119px;top:392px;width:25px;font:12px 'Liberation Sans',sans-serif;color:#262626;line-height:20px;text-align:center">13</div>
<div style="left:119px;top:430px;width:25px;height:1px;background:#bdbdbd"></div>
<div class="t" style="left:119px;top:412px;width:25px;font:12px 'Liberation Sans',sans-serif;color:#262626;line-height:20px;text-align:center">14</div>
<div style="left:119px;top:450px;width:25px;height:1px;background:#bdbdbd"></div>
<div class="t" style="left:119px;top:432px;width:25px;font:12px 'Liberation Sans',sans-serif;color:#262626;line-height:20px;text-align:center">15</div>
<div style="left:119px;top:470px;width:25px;height:1px;background:#bdbdbd"></div>
<div class="t" style="left:119px;top:452px;width:25px;font:12px 'Liberation Sans',sans-serif;color:#262626;line-height:20px;text-align:center">16</div>
<div style="left:119px;top:490px;width:25px;height:1px;background:#bdbdbd"></div>
<div class="t" style="left:119px;top:472px;width:25px;font:12px 'Liberation Sans',sans-serif;color:#262626;line-height:20px;text-align:center">17</div>
<div style="left:119px;top:510px;width:25px;height:1px;background:#bdbdbd"></div>
<div class="t" style="left:119px;top:492px;width:25px;font:12px 'Liberation Sans',sans-serif;color:#262626;line-height:20px;text-align:center">18</div>
<div style="left:119px;top:530px;width:25px;height:1px;background:#bdbdbd"></div>
<div class="t" style="left:119px;top:512px;width:25px;font:12px 'Liberation Sans',sans-serif;color:#262626;line-height:20px;text-align:center">19</div>
<div style="left:119px;top:550px;width:25px;height:1px;background:#bdbdbd"></div>
<div class="t" style="left:119px;top:532px;width:25px;font:12px 'Liberation Sans',sans-serif;color:#262626;line-height:20px;text-align:center">20</div>
<div style="left:119px;top:570px;width:25px;height:1px;background:#bdbdbd"></div>
<div class="t" style="left:119px;top:552px;width:25px;font:12px 'Liberation Sans',sans-serif;color:#262626;line-height:20px;text-align:center">21</div>
<div style="left:119px;top:590px;width:25px;height:1px;background:#bdbdbd"></div>
<div class="t" style="left:119px;top:572px;width:25px;font:12px 'Liberation Sans',sans-serif;color:#262626;line-height:20px;text-align:center">22</div>
<div style="left:119px;top:610px;width:25px;height:1px;background:#bdbdbd"></div>
<div class="t" style="left:119px;top:592px;width:25px;font:12px 'Liberation Sans',sans-serif;color:#262626;line-height:20px;text-align:center">23</div>
<div style="left:119px;top:630px;width:25px;height:1px;background:#bdbdbd"></div>
<div class="t" style="left:119px;top:612px;width:25px;font:12px 'Liberation Sans',sans-serif;color:#262626;line-height:20px;text-align:center">24</div>
<div style="left:119px;top:650px;width:25px;height:1px;background:#bdbdbd"></div>
<div class="t" style="left:119px;top:632px;width:25px;font:12px 'Liberation Sans',sans-serif;color:#262626;line-height:20px;text-align:center">25</div>
<div style="left:119px;top:670px;width:25px;height:1px;background:#bdbdbd"></div>
<div class="t" style="left:119px;top:652px;width:25px;font:12px 'Liberation Sans',sans-serif;color:#262626;line-height:20px;text-align:center">26</div>
<div style="left:119px;top:690px;width:25px;height:1px;background:#bdbdbd"></div>
<div class="t" style="left:119px;top:672px;width:25px;font:12px 'Liberation Sans',sans-serif;color:#262626;line-height:20px;text-align:center">27</div>
<div style="left:119px;top:710px;width:25px;height:1px;background:#bdbdbd"></div>
<div class="t" style="left:119px;top:692px;width:25px;font:12px 'Liberation Sans',sans-serif;color:#262626;line-height:20px;text-align:center">28</div>
<div style="left:119px;top:730px;width:25px;height:1px;background:#bdbdbd"></div>
<div class="t" style="left:119px;top:712px;width:25px;font:12px 'Liberation Sans',sans-serif;color:#262626;line-height:20px;text-align:center">29</div>
<div style="left:119px;top:750px;width:25px;height:1px;background:#bdbdbd"></div>
<div class="t" style="left:119px;top:732px;width:25px;font:12px 'Liberation Sans',sans-serif;color:#262626;line-height:20px;text-align:center">30</div>
<div style="left:119px;top:770px;width:25px;height:1px;background:#bdbdbd"></div>
<div class="t" style="left:119px;top:752px;width:25px;font:12px 'Liberation Sans',sans-serif;color:#262626;line-height:20px;text-align:center">31</div>
<div style="left:119px;top:790px;width:25px;height:1px;background:#bdbdbd"></div>
<div class="t" style="left:119px;top:772px;width:25px;font:12px 'Liberation Sans',sans-serif;color:#262626;line-height:20px;text-align:center">32</div>
<div style="left:119px;top:810px;width:25px;height:1px;background:#bdbdbd"></div>
<div class="t" style="left:119px;top:792px;width:25px;font:12px 'Liberation Sans',sans-serif;color:#262626;line-height:20px;text-align:center">33</div>
<div style="left:0px;top:230px;width:1578px;height:1px;background:#9e9e9e"></div>
<div style="left:0px;top:810px;width:1579px;height:1px;background:#ababab"></div>
<div style="left:1578px;top:150px;width:1px;height:661px;background:#ababab"></div>
<div class="t" style="left:145px;top:180.5px;width:22px;font:bold 14.67px 'Liberation Serif',serif;color:#000;letter-spacing:0.2px;line-height:20px;text-align:center">№</div>
<div class="t" style="left:168px;top:180.5px;width:74px;font:bold 14.67px 'Liberation Serif',serif;color:#000;letter-spacing:0.2px;line-height:20px;text-align:center">Unique ID</div>
<div class="t" style="left:243px;top:180.5px;width:261px;font:bold 14.67px 'Liberation Serif',serif;color:#000;letter-spacing:0.2px;line-height:20px;text-align:center">Name</div>
<div class="t" style="left:505px;top:180.5px;width:98px;font:bold 14.67px 'Liberation Serif',serif;color:#000;letter-spacing:0.2px;line-height:20px;text-align:center">Start</div>
<div class="t" style="left:604px;top:180.5px;width:98px;font:bold 14.67px 'Liberation Serif',serif;color:#000;letter-spacing:0.2px;line-height:20px;text-align:center">Finish</div>
<div class="t" style="left:703px;top:180.5px;width:63px;font:bold 14.67px 'Liberation Serif',serif;color:#000;letter-spacing:0.2px;line-height:20px;text-align:center">Duration</div>
<div class="t" style="left:767px;top:171px;width:85px;font:bold 14.67px 'Liberation Serif',serif;color:#000;letter-spacing:0.55px;line-height:20px;text-align:center">Resource</div>
<div class="t" style="left:767px;top:190px;width:85px;font:bold 14.67px 'Liberation Serif',serif;color:#000;letter-spacing:0.55px;line-height:20px;text-align:center">Names</div>
<div class="t" style="left:853px;top:171px;width:61px;font:bold 14.67px 'Liberation Serif',serif;color:#000;letter-spacing:0.55px;line-height:20px;text-align:center">Predece</div>
<div class="t" style="left:853px;top:190px;width:61px;font:bold 14.67px 'Liberation Serif',serif;color:#000;letter-spacing:0.55px;line-height:20px;text-align:center">ssors</div>
<div style="left:914px;top:151px;width:664px;height:60px;background:#fff"></div>
<div style="left:914px;top:151px;width:1px;height:60px;background:#000"></div>
<div style="left:914px;top:170px;width:664px;height:1px;background:#000"></div>
<div style="left:914px;top:190px;width:664px;height:1px;background:#000"></div>
<div style="left:914px;top:210px;width:664px;height:1px;background:#000"></div>
<div class="t" style="left:917px;top:150px;font:14.67px 'Liberation Serif',serif;color:#000;letter-spacing:-0.6px;line-height:20px;text-align:left">2022</div>
<div class="t" style="left:917px;top:170px;font:14.67px 'Liberation Serif',serif;color:#000;line-height:20px;text-align:left">Январь 2022</div>
<div style="left:1286px;top:171px;width:1px;height:20px;background:#000"></div>
<div class="t" style="left:1289px;top:170px;font:14.67px 'Liberation Serif',serif;color:#000;line-height:20px;text-align:left">Февраль 2022</div>
<div style="left:914px;top:191px;width:1px;height:20px;background:#000"></div>
<div class="t" style="left:915px;top:191px;width:23px;height:19px;overflow:hidden;font:12.5px 'Liberation Serif',serif;line-height:19px;letter-spacing:-0.4px;color:#000;padding-left:2px;box-sizing:border-box">01-янв-22</div>
<svg style="position:absolute;left:915px;top:191px" width="6" height="6"><path d="M0 0h6L0 6z" fill="#107c10"/></svg>
<div style="left:938px;top:191px;width:1px;height:20px;background:#000"></div>
<div class="t" style="left:939px;top:191px;width:83px;height:19px;overflow:hidden;font:12.5px 'Liberation Serif',serif;line-height:19px;letter-spacing:-0.4px;color:#000;padding-left:2px;box-sizing:border-box">03-янв-22</div>
<svg style="position:absolute;left:939px;top:191px" width="6" height="6"><path d="M0 0h6L0 6z" fill="#107c10"/></svg>
<div style="left:1022px;top:191px;width:1px;height:20px;background:#000"></div>
<div class="t" style="left:1023px;top:191px;width:83px;height:19px;overflow:hidden;font:12.5px 'Liberation Serif',serif;line-height:19px;letter-spacing:-0.4px;color:#000;padding-left:2px;box-sizing:border-box">10-янв-22</div>
<svg style="position:absolute;left:1023px;top:191px" width="6" height="6"><path d="M0 0h6L0 6z" fill="#107c10"/></svg>
<div style="left:1106px;top:191px;width:1px;height:20px;background:#000"></div>
<div class="t" style="left:1107px;top:191px;width:83px;height:19px;overflow:hidden;font:12.5px 'Liberation Serif',serif;line-height:19px;letter-spacing:-0.4px;color:#000;padding-left:2px;box-sizing:border-box">17-янв-22</div>
<svg style="position:absolute;left:1107px;top:191px" width="6" height="6"><path d="M0 0h6L0 6z" fill="#107c10"/></svg>
<div style="left:1190px;top:191px;width:1px;height:20px;background:#000"></div>
<div class="t" style="left:1191px;top:191px;width:83px;height:19px;overflow:hidden;font:12.5px 'Liberation Serif',serif;line-height:19px;letter-spacing:-0.4px;color:#000;padding-left:2px;box-sizing:border-box">24-янв-22</div>
<svg style="position:absolute;left:1191px;top:191px" width="6" height="6"><path d="M0 0h6L0 6z" fill="#107c10"/></svg>
<div style="left:1274px;top:191px;width:1px;height:20px;background:#000"></div>
<div class="t" style="left:1275px;top:191px;width:83px;height:19px;overflow:hidden;font:12.5px 'Liberation Serif',serif;line-height:19px;letter-spacing:-0.4px;color:#000;padding-left:2px;box-sizing:border-box">31-янв-22</div>
<svg style="position:absolute;left:1275px;top:191px" width="6" height="6"><path d="M0 0h6L0 6z" fill="#107c10"/></svg>
<div style="left:1358px;top:191px;width:1px;height:20px;background:#000"></div>
<div class="t" style="left:1359px;top:191px;width:83px;height:19px;overflow:hidden;font:12.5px 'Liberation Serif',serif;line-height:19px;letter-spacing:-0.4px;color:#000;padding-left:2px;box-sizing:border-box">07-фев-22</div>
<svg style="position:absolute;left:1359px;top:191px" width="6" height="6"><path d="M0 0h6L0 6z" fill="#107c10"/></svg>
<div style="left:1442px;top:191px;width:1px;height:20px;background:#000"></div>
<div class="t" style="left:1443px;top:191px;width:83px;height:19px;overflow:hidden;font:12.5px 'Liberation Serif',serif;line-height:19px;letter-spacing:-0.4px;color:#000;padding-left:2px;box-sizing:border-box">14-фев-22</div>
<svg style="position:absolute;left:1443px;top:191px" width="6" height="6"><path d="M0 0h6L0 6z" fill="#107c10"/></svg>
<div style="left:1526px;top:191px;width:1px;height:20px;background:#000"></div>
<div class="t" style="left:1527px;top:191px;width:51px;height:19px;overflow:hidden;font:12.5px 'Liberation Serif',serif;line-height:19px;letter-spacing:-0.4px;color:#000;padding-left:2px;box-sizing:border-box">21-фев-22</div>
<svg style="position:absolute;left:1527px;top:191px" width="6" height="6"><path d="M0 0h6L0 6z" fill="#107c10"/></svg>
<div class="t" style="left:915px;top:211px;width:11px;height:19px;overflow:hidden;line-height:20px;"><div style="position:absolute;left:50%;top:0;transform:translateX(-50%);font:12.5px 'Liberation Serif',serif;line-height:19px;color:#000">С</div></div>
<div class="t" style="left:927px;top:211px;width:11px;height:19px;overflow:hidden;line-height:20px;"><div style="position:absolute;left:50%;top:0;transform:translateX(-50%);font:12.5px 'Liberation Serif',serif;line-height:19px;color:#000">В</div></div>
<div class="t" style="left:939px;top:211px;width:11px;height:19px;overflow:hidden;line-height:20px;"><div style="position:absolute;left:50%;top:0;transform:translateX(-50%);font:12.5px 'Liberation Serif',serif;line-height:19px;color:#000">П</div></div>
<div class="t" style="left:951px;top:211px;width:11px;height:19px;overflow:hidden;line-height:20px;"><div style="position:absolute;left:50%;top:0;transform:translateX(-50%);font:12.5px 'Liberation Serif',serif;line-height:19px;color:#000">В</div></div>
<div class="t" style="left:963px;top:211px;width:11px;height:19px;overflow:hidden;line-height:20px;"><div style="position:absolute;left:50%;top:0;transform:translateX(-50%);font:12.5px 'Liberation Serif',serif;line-height:19px;color:#000">С</div></div>
<div class="t" style="left:975px;top:211px;width:11px;height:19px;overflow:hidden;line-height:20px;"><div style="position:absolute;left:50%;top:0;transform:translateX(-50%);font:12.5px 'Liberation Serif',serif;line-height:19px;color:#000">Ч</div></div>
<div class="t" style="left:987px;top:211px;width:11px;height:19px;overflow:hidden;line-height:20px;"><div style="position:absolute;left:50%;top:0;transform:translateX(-50%);font:12.5px 'Liberation Serif',serif;line-height:19px;color:#000">П</div></div>
<div class="t" style="left:999px;top:211px;width:11px;height:19px;overflow:hidden;line-height:20px;"><div style="position:absolute;left:50%;top:0;transform:translateX(-50%);font:12.5px 'Liberation Serif',serif;line-height:19px;color:#000">С</div></div>
<div class="t" style="left:1011px;top:211px;width:11px;height:19px;overflow:hidden;line-height:20px;"><div style="position:absolute;left:50%;top:0;transform:translateX(-50%);font:12.5px 'Liberation Serif',serif;line-height:19px;color:#000">В</div></div>
<div class="t" style="left:1023px;top:211px;width:11px;height:19px;overflow:hidden;line-height:20px;"><div style="position:absolute;left:50%;top:0;transform:translateX(-50%);font:12.5px 'Liberation Serif',serif;line-height:19px;color:#000">П</div></div>
<div class="t" style="left:1035px;top:211px;width:11px;height:19px;overflow:hidden;line-height:20px;"><div style="position:absolute;left:50%;top:0;transform:translateX(-50%);font:12.5px 'Liberation Serif',serif;line-height:19px;color:#000">В</div></div>
<div class="t" style="left:1047px;top:211px;width:11px;height:19px;overflow:hidden;line-height:20px;"><div style="position:absolute;left:50%;top:0;transform:translateX(-50%);font:12.5px 'Liberation Serif',serif;line-height:19px;color:#000">С</div></div>
<div class="t" style="left:1059px;top:211px;width:11px;height:19px;overflow:hidden;line-height:20px;"><div style="position:absolute;left:50%;top:0;transform:translateX(-50%);font:12.5px 'Liberation Serif',serif;line-height:19px;color:#000">Ч</div></div>
<div class="t" style="left:1071px;top:211px;width:11px;height:19px;overflow:hidden;line-height:20px;"><div style="position:absolute;left:50%;top:0;transform:translateX(-50%);font:12.5px 'Liberation Serif',serif;line-height:19px;color:#000">П</div></div>
<div class="t" style="left:1083px;top:211px;width:11px;height:19px;overflow:hidden;line-height:20px;"><div style="position:absolute;left:50%;top:0;transform:translateX(-50%);font:12.5px 'Liberation Serif',serif;line-height:19px;color:#000">С</div></div>
<div class="t" style="left:1095px;top:211px;width:11px;height:19px;overflow:hidden;line-height:20px;"><div style="position:absolute;left:50%;top:0;transform:translateX(-50%);font:12.5px 'Liberation Serif',serif;line-height:19px;color:#000">В</div></div>
<div class="t" style="left:1107px;top:211px;width:11px;height:19px;overflow:hidden;line-height:20px;"><div style="position:absolute;left:50%;top:0;transform:translateX(-50%);font:12.5px 'Liberation Serif',serif;line-height:19px;color:#000">П</div></div>
<div class="t" style="left:1119px;top:211px;width:11px;height:19px;overflow:hidden;line-height:20px;"><div style="position:absolute;left:50%;top:0;transform:translateX(-50%);font:12.5px 'Liberation Serif',serif;line-height:19px;color:#000">В</div></div>
<div class="t" style="left:1131px;top:211px;width:11px;height:19px;overflow:hidden;line-height:20px;"><div style="position:absolute;left:50%;top:0;transform:translateX(-50%);font:12.5px 'Liberation Serif',serif;line-height:19px;color:#000">С</div></div>
<div class="t" style="left:1143px;top:211px;width:11px;height:19px;overflow:hidden;line-height:20px;"><div style="position:absolute;left:50%;top:0;transform:translateX(-50%);font:12.5px 'Liberation Serif',serif;line-height:19px;color:#000">Ч</div></div>
<div class="t" style="left:1155px;top:211px;width:11px;height:19px;overflow:hidden;line-height:20px;"><div style="position:absolute;left:50%;top:0;transform:translateX(-50%);font:12.5px 'Liberation Serif',serif;line-height:19px;color:#000">П</div></div>
<div class="t" style="left:1167px;top:211px;width:11px;height:19px;overflow:hidden;line-height:20px;"><div style="position:absolute;left:50%;top:0;transform:translateX(-50%);font:12.5px 'Liberation Serif',serif;line-height:19px;color:#000">С</div></div>
<div class="t" style="left:1179px;top:211px;width:11px;height:19px;overflow:hidden;line-height:20px;"><div style="position:absolute;left:50%;top:0;transform:translateX(-50%);font:12.5px 'Liberation Serif',serif;line-height:19px;color:#000">В</div></div>
<div class="t" style="left:1191px;top:211px;width:11px;height:19px;overflow:hidden;line-height:20px;"><div style="position:absolute;left:50%;top:0;transform:translateX(-50%);font:12.5px 'Liberation Serif',serif;line-height:19px;color:#000">П</div></div>
<div class="t" style="left:1203px;top:211px;width:11px;height:19px;overflow:hidden;line-height:20px;"><div style="position:absolute;left:50%;top:0;transform:translateX(-50%);font:12.5px 'Liberation Serif',serif;line-height:19px;color:#000">В</div></div>
<div class="t" style="left:1215px;top:211px;width:11px;height:19px;overflow:hidden;line-height:20px;"><div style="position:absolute;left:50%;top:0;transform:translateX(-50%);font:12.5px 'Liberation Serif',serif;line-height:19px;color:#000">С</div></div>
<div class="t" style="left:1227px;top:211px;width:11px;height:19px;overflow:hidden;line-height:20px;"><div style="position:absolute;left:50%;top:0;transform:translateX(-50%);font:12.5px 'Liberation Serif',serif;line-height:19px;color:#000">Ч</div></div>
<div class="t" style="left:1239px;top:211px;width:11px;height:19px;overflow:hidden;line-height:20px;"><div style="position:absolute;left:50%;top:0;transform:translateX(-50%);font:12.5px 'Liberation Serif',serif;line-height:19px;color:#000">П</div></div>
<div class="t" style="left:1251px;top:211px;width:11px;height:19px;overflow:hidden;line-height:20px;"><div style="position:absolute;left:50%;top:0;transform:translateX(-50%);font:12.5px 'Liberation Serif',serif;line-height:19px;color:#000">С</div></div>
<div class="t" style="left:1263px;top:211px;width:11px;height:19px;overflow:hidden;line-height:20px;"><div style="position:absolute;left:50%;top:0;transform:translateX(-50%);font:12.5px 'Liberation Serif',serif;line-height:19px;color:#000">В</div></div>
<div class="t" style="left:1275px;top:211px;width:11px;height:19px;overflow:hidden;line-height:20px;"><div style="position:absolute;left:50%;top:0;transform:translateX(-50%);font:12.5px 'Liberation Serif',serif;line-height:19px;color:#000">П</div></div>
<div class="t" style="left:1287px;top:211px;width:11px;height:19px;overflow:hidden;line-height:20px;"><div style="position:absolute;left:50%;top:0;transform:translateX(-50%);font:12.5px 'Liberation Serif',serif;line-height:19px;color:#000">В</div></div>
<div class="t" style="left:1299px;top:211px;width:11px;height:19px;overflow:hidden;line-height:20px;"><div style="position:absolute;left:50%;top:0;transform:translateX(-50%);font:12.5px 'Liberation Serif',serif;line-height:19px;color:#000">С</div></div>
<div class="t" style="left:1311px;top:211px;width:11px;height:19px;overflow:hidden;line-height:20px;"><div style="position:absolute;left:50%;top:0;transform:translateX(-50%);font:12.5px 'Liberation Serif',serif;line-height:19px;color:#000">Ч</div></div>
<div class="t" style="left:1323px;top:211px;width:11px;height:19px;overflow:hidden;line-height:20px;"><div style="position:absolute;left:50%;top:0;transform:translateX(-50%);font:12.5px 'Liberation Serif',serif;line-height:19px;color:#000">П</div></div>
<div class="t" style="left:1335px;top:211px;width:11px;height:19px;overflow:hidden;line-height:20px;"><div style="position:absolute;left:50%;top:0;transform:translateX(-50%);font:12.5px 'Liberation Serif',serif;line-height:19px;color:#000">С</div></div>
<div class="t" style="left:1347px;top:211px;width:11px;height:19px;overflow:hidden;line-height:20px;"><div style="position:absolute;left:50%;top:0;transform:translateX(-50%);font:12.5px 'Liberation Serif',serif;line-height:19px;color:#000">В</div></div>
<div class="t" style="left:1359px;top:211px;width:11px;height:19px;overflow:hidden;line-height:20px;"><div style="position:absolute;left:50%;top:0;transform:translateX(-50%);font:12.5px 'Liberation Serif',serif;line-height:19px;color:#000">П</div></div>
<div class="t" style="left:1371px;top:211px;width:11px;height:19px;overflow:hidden;line-height:20px;"><div style="position:absolute;left:50%;top:0;transform:translateX(-50%);font:12.5px 'Liberation Serif',serif;line-height:19px;color:#000">В</div></div>
<div class="t" style="left:1383px;top:211px;width:11px;height:19px;overflow:hidden;line-height:20px;"><div style="position:absolute;left:50%;top:0;transform:translateX(-50%);font:12.5px 'Liberation Serif',serif;line-height:19px;color:#000">С</div></div>
<div class="t" style="left:1395px;top:211px;width:11px;height:19px;overflow:hidden;line-height:20px;"><div style="position:absolute;left:50%;top:0;transform:translateX(-50%);font:12.5px 'Liberation Serif',serif;line-height:19px;color:#000">Ч</div></div>
<div class="t" style="left:1407px;top:211px;width:11px;height:19px;overflow:hidden;line-height:20px;"><div style="position:absolute;left:50%;top:0;transform:translateX(-50%);font:12.5px 'Liberation Serif',serif;line-height:19px;color:#000">П</div></div>
<div class="t" style="left:1419px;top:211px;width:11px;height:19px;overflow:hidden;line-height:20px;"><div style="position:absolute;left:50%;top:0;transform:translateX(-50%);font:12.5px 'Liberation Serif',serif;line-height:19px;color:#000">С</div></div>
<div class="t" style="left:1431px;top:211px;width:11px;height:19px;overflow:hidden;line-height:20px;"><div style="position:absolute;left:50%;top:0;transform:translateX(-50%);font:12.5px 'Liberation Serif',serif;line-height:19px;color:#000">В</div></div>
<div class="t" style="left:1443px;top:211px;width:11px;height:19px;overflow:hidden;line-height:20px;"><div style="position:absolute;left:50%;top:0;transform:translateX(-50%);font:12.5px 'Liberation Serif',serif;line-height:19px;color:#000">П</div></div>
<div class="t" style="left:1455px;top:211px;width:11px;height:19px;overflow:hidden;line-height:20px;"><div style="position:absolute;left:50%;top:0;transform:translateX(-50%);font:12.5px 'Liberation Serif',serif;line-height:19px;color:#000">В</div></div>
<div class="t" style="left:1467px;top:211px;width:11px;height:19px;overflow:hidden;line-height:20px;"><div style="position:absolute;left:50%;top:0;transform:translateX(-50%);font:12.5px 'Liberation Serif',serif;line-height:19px;color:#000">С</div></div>
<div class="t" style="left:1479px;top:211px;width:11px;height:19px;overflow:hidden;line-height:20px;"><div style="position:absolute;left:50%;top:0;transform:translateX(-50%);font:12.5px 'Liberation Serif',serif;line-height:19px;color:#000">Ч</div></div>
<div class="t" style="left:1491px;top:211px;width:11px;height:19px;overflow:hidden;line-height:20px;"><div style="position:absolute;left:50%;top:0;transform:translateX(-50%);font:12.5px 'Liberation Serif',serif;line-height:19px;color:#000">П</div></div>
<div class="t" style="left:1503px;top:211px;width:11px;height:19px;overflow:hidden;line-height:20px;"><div style="position:absolute;left:50%;top:0;transform:translateX(-50%);font:12.5px 'Liberation Serif',serif;line-height:19px;color:#000">С</div></div>
<div class="t" style="left:1515px;top:211px;width:11px;height:19px;overflow:hidden;line-height:20px;"><div style="position:absolute;left:50%;top:0;transform:translateX(-50%);font:12.5px 'Liberation Serif',serif;line-height:19px;color:#000">В</div></div>
<div class="t" style="left:1527px;top:211px;width:11px;height:19px;overflow:hidden;line-height:20px;"><div style="position:absolute;left:50%;top:0;transform:translateX(-50%);font:12.5px 'Liberation Serif',serif;line-height:19px;color:#000">П</div></div>
<div class="t" style="left:1539px;top:211px;width:11px;height:19px;overflow:hidden;line-height:20px;"><div style="position:absolute;left:50%;top:0;transform:translateX(-50%);font:12.5px 'Liberation Serif',serif;line-height:19px;color:#000">В</div></div>
<div class="t" style="left:1551px;top:211px;width:11px;height:19px;overflow:hidden;line-height:20px;"><div style="position:absolute;left:50%;top:0;transform:translateX(-50%);font:12.5px 'Liberation Serif',serif;line-height:19px;color:#000">С</div></div>
<div class="t" style="left:1563px;top:211px;width:11px;height:19px;overflow:hidden;line-height:20px;"><div style="position:absolute;left:50%;top:0;transform:translateX(-50%);font:12.5px 'Liberation Serif',serif;line-height:19px;color:#000">Ч</div></div>
<div class="t" style="left:1575px;top:211px;width:3px;height:19px;overflow:hidden;line-height:20px;"><div style="position:absolute;left:50%;top:0;transform:translateX(-50%);font:12.5px 'Liberation Serif',serif;line-height:19px;color:#000">П</div></div>
<div style="left:938px;top:250px;width:640px;height:21px;background:#4a78c7"></div>
<div style="left:938px;top:270px;width:97px;height:21px;background:#8eaadb"></div>
<div style="left:938px;top:290px;width:13px;height:21px;background:#b4c6e7"></div>
<div style="left:950px;top:310px;width:85px;height:21px;background:#b4c6e7"></div>
<div style="left:1034px;top:350px;width:445px;height:21px;background:#8eaadb"></div>
<div style="left:1034px;top:370px;width:169px;height:21px;background:#b4c6e7"></div>
<div style="left:1202px;top:390px;width:85px;height:21px;background:#b4c6e7"></div>
<div style="left:1286px;top:410px;width:85px;height:21px;background:#b4c6e7"></div>
<div style="left:1370px;top:430px;width:85px;height:21px;background:#b4c6e7"></div>
<div style="left:1370px;top:450px;width:109px;height:21px;background:#b4c6e7"></div>
<div style="left:1478px;top:490px;width:100px;height:21px;background:#8eaadb"></div>
<div style="left:1478px;top:510px;width:100px;height:21px;background:#b4c6e7"></div>
<div style="left:1478px;top:550px;width:100px;height:21px;background:#b4c6e7"></div>
<div style="left:1478px;top:570px;width:100px;height:21px;background:#d9e1f2"></div>
<div style="left:1478px;top:590px;width:100px;height:21px;background:#d9e1f2"></div>
<div style="left:1478px;top:610px;width:100px;height:21px;background:#d9e1f2"></div>
<div style="left:1478px;top:710px;width:100px;height:21px;background:#d9e1f2"></div>
<div style="left:1478px;top:730px;width:100px;height:21px;background:#d9e1f2"></div>
<div style="left:1478px;top:750px;width:100px;height:21px;background:#d9e1f2"></div>
<div style="left:938px;top:250px;width:640px;height:1px;background:repeating-linear-gradient(90deg,#000 0 3px,rgba(255,255,255,.85) 3px 4px)"></div>
<div style="left:938px;top:270px;width:640px;height:1px;background:repeating-linear-gradient(90deg,#000 0 3px,rgba(255,255,255,.85) 3px 4px)"></div>
<div style="left:938px;top:250px;width:1px;height:21px;background:repeating-linear-gradient(180deg,#000 0 3px,rgba(255,255,255,.85) 3px 4px)"></div>
<div style="left:938px;top:270px;width:97px;height:1px;background:repeating-linear-gradient(90deg,#000 0 3px,rgba(255,255,255,.85) 3px 4px)"></div>
<div style="left:938px;top:290px;width:97px;height:1px;background:repeating-linear-gradient(90deg,#000 0 3px,rgba(255,255,255,.85) 3px 4px)"></div>
<div style="left:938px;top:270px;width:1px;height:21px;background:repeating-linear-gradient(180deg,#000 0 3px,rgba(255,255,255,.85) 3px 4px)"></div>
<div style="left:1034px;top:270px;width:1px;height:21px;background:repeating-linear-gradient(180deg,#000 0 3px,rgba(255,255,255,.85) 3px 4px)"></div>
<div style="left:938px;top:290px;width:13px;height:1px;background:repeating-linear-gradient(90deg,#000 0 3px,rgba(255,255,255,.85) 3px 4px)"></div>
<div style="left:938px;top:310px;width:13px;height:1px;background:repeating-linear-gradient(90deg,#000 0 3px,rgba(255,255,255,.85) 3px 4px)"></div>
<div style="left:938px;top:290px;width:1px;height:21px;background:repeating-linear-gradient(180deg,#000 0 3px,rgba(255,255,255,.85) 3px 4px)"></div>
<div style="left:950px;top:290px;width:1px;height:21px;background:repeating-linear-gradient(180deg,#000 0 3px,rgba(255,255,255,.85) 3px 4px)"></div>
<div style="left:950px;top:310px;width:85px;height:1px;background:repeating-linear-gradient(90deg,#000 0 3px,rgba(255,255,255,.85) 3px 4px)"></div>
<div style="left:950px;top:330px;width:85px;height:1px;background:repeating-linear-gradient(90deg,#000 0 3px,rgba(255,255,255,.85) 3px 4px)"></div>
<div style="left:950px;top:310px;width:1px;height:21px;background:repeating-linear-gradient(180deg,#000 0 3px,rgba(255,255,255,.85) 3px 4px)"></div>
<div style="left:1034px;top:310px;width:1px;height:21px;background:repeating-linear-gradient(180deg,#000 0 3px,rgba(255,255,255,.85) 3px 4px)"></div>
<div style="left:1034px;top:350px;width:445px;height:1px;background:repeating-linear-gradient(90deg,#000 0 3px,rgba(255,255,255,.85) 3px 4px)"></div>
<div style="left:1034px;top:370px;width:445px;height:1px;background:repeating-linear-gradient(90deg,#000 0 3px,rgba(255,255,255,.85) 3px 4px)"></div>
<div style="left:1034px;top:350px;width:1px;height:21px;background:repeating-linear-gradient(180deg,#000 0 3px,rgba(255,255,255,.85) 3px 4px)"></div>
<div style="left:1478px;top:350px;width:1px;height:21px;background:repeating-linear-gradient(180deg,#000 0 3px,rgba(255,255,255,.85) 3px 4px)"></div>
<div style="left:1034px;top:370px;width:169px;height:1px;background:repeating-linear-gradient(90deg,#000 0 3px,rgba(255,255,255,.85) 3px 4px)"></div>
<div style="left:1034px;top:390px;width:169px;height:1px;background:repeating-linear-gradient(90deg,#000 0 3px,rgba(255,255,255,.85) 3px 4px)"></div>
<div style="left:1034px;top:370px;width:1px;height:21px;background:repeating-linear-gradient(180deg,#000 0 3px,rgba(255,255,255,.85) 3px 4px)"></div>
<div style="left:1202px;top:370px;width:1px;height:21px;background:repeating-linear-gradient(180deg,#000 0 3px,rgba(255,255,255,.85) 3px 4px)"></div>
<div style="left:1202px;top:390px;width:85px;height:1px;background:repeating-linear-gradient(90deg,#000 0 3px,rgba(255,255,255,.85) 3px 4px)"></div>
<div style="left:1202px;top:410px;width:85px;height:1px;background:repeating-linear-gradient(90deg,#000 0 3px,rgba(255,255,255,.85) 3px 4px)"></div>
<div style="left:1202px;top:390px;width:1px;height:21px;background:repeating-linear-gradient(180deg,#000 0 3px,rgba(255,255,255,.85) 3px 4px)"></div>
<div style="left:1286px;top:390px;width:1px;height:21px;background:repeating-linear-gradient(180deg,#000 0 3px,rgba(255,255,255,.85) 3px 4px)"></div>
<div style="left:1286px;top:410px;width:85px;height:1px;background:repeating-linear-gradient(90deg,#000 0 3px,rgba(255,255,255,.85) 3px 4px)"></div>
<div style="left:1286px;top:430px;width:85px;height:1px;background:repeating-linear-gradient(90deg,#000 0 3px,rgba(255,255,255,.85) 3px 4px)"></div>
<div style="left:1286px;top:410px;width:1px;height:21px;background:repeating-linear-gradient(180deg,#000 0 3px,rgba(255,255,255,.85) 3px 4px)"></div>
<div style="left:1370px;top:410px;width:1px;height:21px;background:repeating-linear-gradient(180deg,#000 0 3px,rgba(255,255,255,.85) 3px 4px)"></div>
<div style="left:1370px;top:430px;width:85px;height:1px;background:repeating-linear-gradient(90deg,#000 0 3px,rgba(255,255,255,.85) 3px 4px)"></div>
<div style="left:1370px;top:450px;width:85px;height:1px;background:repeating-linear-gradient(90deg,#000 0 3px,rgba(255,255,255,.85) 3px 4px)"></div>
<div style="left:1370px;top:430px;width:1px;height:21px;background:repeating-linear-gradient(180deg,#000 0 3px,rgba(255,255,255,.85) 3px 4px)"></div>
<div style="left:1454px;top:430px;width:1px;height:21px;background:repeating-linear-gradient(180deg,#000 0 3px,rgba(255,255,255,.85) 3px 4px)"></div>
<div style="left:1370px;top:450px;width:109px;height:1px;background:repeating-linear-gradient(90deg,#000 0 3px,rgba(255,255,255,.85) 3px 4px)"></div>
<div style="left:1370px;top:470px;width:109px;height:1px;background:repeating-linear-gradient(90deg,#000 0 3px,rgba(255,255,255,.85) 3px 4px)"></div>
<div style="left:1370px;top:450px;width:1px;height:21px;background:repeating-linear-gradient(180deg,#000 0 3px,rgba(255,255,255,.85) 3px 4px)"></div>
<div style="left:1478px;top:450px;width:1px;height:21px;background:repeating-linear-gradient(180deg,#000 0 3px,rgba(255,255,255,.85) 3px 4px)"></div>
<div style="left:1478px;top:490px;width:100px;height:1px;background:repeating-linear-gradient(90deg,#000 0 3px,rgba(255,255,255,.85) 3px 4px)"></div>
<div style="left:1478px;top:510px;width:100px;height:1px;background:repeating-linear-gradient(90deg,#000 0 3px,rgba(255,255,255,.85) 3px 4px)"></div>
<div style="left:1478px;top:490px;width:1px;height:21px;background:repeating-linear-gradient(180deg,#000 0 3px,rgba(255,255,255,.85) 3px 4px)"></div>
<div style="left:1478px;top:510px;width:100px;height:1px;background:repeating-linear-gradient(90deg,#000 0 3px,rgba(255,255,255,.85) 3px 4px)"></div>
<div style="left:1478px;top:530px;width:100px;height:1px;background:repeating-linear-gradient(90deg,#000 0 3px,rgba(255,255,255,.85) 3px 4px)"></div>
<div style="left:1478px;top:510px;width:1px;height:21px;background:repeating-linear-gradient(180deg,#000 0 3px,rgba(255,255,255,.85) 3px 4px)"></div>
<div style="left:1478px;top:550px;width:100px;height:1px;background:repeating-linear-gradient(90deg,#000 0 3px,rgba(255,255,255,.85) 3px 4px)"></div>
<div style="left:1478px;top:570px;width:100px;height:1px;background:repeating-linear-gradient(90deg,#000 0 3px,rgba(255,255,255,.85) 3px 4px)"></div>
<div style="left:1478px;top:550px;width:1px;height:21px;background:repeating-linear-gradient(180deg,#000 0 3px,rgba(255,255,255,.85) 3px 4px)"></div>
<div style="left:1478px;top:570px;width:100px;height:1px;background:repeating-linear-gradient(90deg,#000 0 3px,rgba(255,255,255,.85) 3px 4px)"></div>
<div style="left:1478px;top:590px;width:100px;height:1px;background:repeating-linear-gradient(90deg,#000 0 3px,rgba(255,255,255,.85) 3px 4px)"></div>
<div style="left:1478px;top:570px;width:1px;height:21px;background:repeating-linear-gradient(180deg,#000 0 3px,rgba(255,255,255,.85) 3px 4px)"></div>
<div style="left:1478px;top:590px;width:100px;height:1px;background:repeating-linear-gradient(90deg,#000 0 3px,rgba(255,255,255,.85) 3px 4px)"></div>
<div style="left:1478px;top:610px;width:100px;height:1px;background:repeating-linear-gradient(90deg,#000 0 3px,rgba(255,255,255,.85) 3px 4px)"></div>
<div style="left:1478px;top:590px;width:1px;height:21px;background:repeating-linear-gradient(180deg,#000 0 3px,rgba(255,255,255,.85) 3px 4px)"></div>
<div style="left:1478px;top:610px;width:100px;height:1px;background:repeating-linear-gradient(90deg,#000 0 3px,rgba(255,255,255,.85) 3px 4px)"></div>
<div style="left:1478px;top:630px;width:100px;height:1px;background:repeating-linear-gradient(90deg,#000 0 3px,rgba(255,255,255,.85) 3px 4px)"></div>
<div style="left:1478px;top:610px;width:1px;height:21px;background:repeating-linear-gradient(180deg,#000 0 3px,rgba(255,255,255,.85) 3px 4px)"></div>
<div style="left:1478px;top:710px;width:100px;height:1px;background:repeating-linear-gradient(90deg,#000 0 3px,rgba(255,255,255,.85) 3px 4px)"></div>
<div style="left:1478px;top:730px;width:100px;height:1px;background:repeating-linear-gradient(90deg,#000 0 3px,rgba(255,255,255,.85) 3px 4px)"></div>
<div style="left:1478px;top:710px;width:1px;height:21px;background:repeating-linear-gradient(180deg,#000 0 3px,rgba(255,255,255,.85) 3px 4px)"></div>
<div style="left:1478px;top:730px;width:100px;height:1px;background:repeating-linear-gradient(90deg,#000 0 3px,rgba(255,255,255,.85) 3px 4px)"></div>
<div style="left:1478px;top:750px;width:100px;height:1px;background:repeating-linear-gradient(90deg,#000 0 3px,rgba(255,255,255,.85) 3px 4px)"></div>
<div style="left:1478px;top:730px;width:1px;height:21px;background:repeating-linear-gradient(180deg,#000 0 3px,rgba(255,255,255,.85) 3px 4px)"></div>
<div style="left:1478px;top:750px;width:100px;height:1px;background:repeating-linear-gradient(90deg,#000 0 3px,rgba(255,255,255,.85) 3px 4px)"></div>
<div style="left:1478px;top:770px;width:100px;height:1px;background:repeating-linear-gradient(90deg,#000 0 3px,rgba(255,255,255,.85) 3px 4px)"></div>
<div style="left:1478px;top:750px;width:1px;height:21px;background:repeating-linear-gradient(180deg,#000 0 3px,rgba(255,255,255,.85) 3px 4px)"></div>
<svg style="position:absolute;left:917px;top:236px" width="8" height="11"><path d="M4 0.8L7 5.5 4 10.2 1 5.5z" fill="none" stroke="#000" stroke-width="1.3"/></svg>
<svg style="position:absolute;left:1025px;top:336px" width="8" height="11"><path d="M4 0.8L7 5.5 4 10.2 1 5.5z" fill="none" stroke="#000" stroke-width="1.3"/></svg>
<svg style="position:absolute;left:1469px;top:476px" width="8" height="11"><path d="M4 0.8L7 5.5 4 10.2 1 5.5z" fill="none" stroke="#000" stroke-width="1.3"/></svg>
<div class="t" style="left:145px;top:231px;width:20px;font:14.67px 'Liberation Serif',serif;color:#000;line-height:20px;text-align:right">1</div>
<div class="t" style="left:170px;top:231px;font:14.67px 'Liberation Serif',serif;color:#000;line-height:20px;text-align:left">1</div>
<svg style="position:absolute;left:168px;top:231px" width="6" height="6"><path d="M0 0h6L0 6z" fill="#107c10"/></svg>
<div class="t" style="left:249px;top:231px;font:14.67px 'Liberation Serif',serif;color:#000;line-height:20px;text-align:left">Project&#x27;s start</div>
<div class="t" style="left:507px;top:231px;font:14.67px 'Liberation Serif',serif;color:#000;line-height:20px;text-align:left">Sat 01.01.22</div>
<div class="t" style="left:606px;top:231px;font:14.67px 'Liberation Serif',serif;color:#000;line-height:20px;text-align:left">Sat 01.01.22</div>
<div class="t" style="left:705px;top:231px;font:14.67px 'Liberation Serif',serif;color:#000;line-height:20px;text-align:left">0 days</div>
<div class="t" style="left:145px;top:251px;width:20px;font:bold 14.67px 'Liberation Serif',serif;color:#000;line-height:20px;text-align:right">3</div>
<div class="t" style="left:170px;top:251px;font:bold 14.67px 'Liberation Serif',serif;color:#000;letter-spacing:0.5px;line-height:20px;text-align:left">2</div>
<svg style="position:absolute;left:168px;top:251px" width="6" height="6"><path d="M0 0h6L0 6z" fill="#107c10"/></svg>
<div class="t" style="left:249px;top:251px;font:bold 14.67px 'Liberation Serif',serif;color:#000;letter-spacing:0.4px;line-height:20px;text-align:left">Software system development project</div>
<div class="t" style="left:507px;top:251px;font:bold 14.67px 'Liberation Serif',serif;color:#000;letter-spacing:0.5px;line-height:20px;text-align:left">Mon 03.01.22</div>
<div class="t" style="left:606px;top:251px;font:bold 14.67px 'Liberation Serif',serif;color:#000;letter-spacing:0.5px;line-height:20px;text-align:left">Fri 13.05.22</div>
<div class="t" style="left:705px;top:251px;font:bold 14.67px 'Liberation Serif',serif;color:#000;letter-spacing:0.5px;line-height:20px;text-align:left">95 days?</div>
<div class="t" style="left:145px;top:271px;width:20px;font:bold 14.67px 'Liberation Serif',serif;color:#000;line-height:20px;text-align:right">4</div>
<div class="t" style="left:170px;top:271px;font:bold 14.67px 'Liberation Serif',serif;color:#000;letter-spacing:0.5px;line-height:20px;text-align:left">2.1</div>
<div class="t" style="left:253px;top:271px;font:bold 14.67px 'Liberation Serif',serif;color:#000;letter-spacing:0px;line-height:20px;text-align:left">Initiating</div>
<div class="t" style="left:507px;top:271px;font:bold 14.67px 'Liberation Serif',serif;color:#000;letter-spacing:0.5px;line-height:20px;text-align:left">Mon 03.01.22</div>
<div class="t" style="left:606px;top:271px;font:bold 14.67px 'Liberation Serif',serif;color:#000;letter-spacing:0.5px;line-height:20px;text-align:left">Mon 10.01.22</div>
<div class="t" style="left:705px;top:271px;font:bold 14.67px 'Liberation Serif',serif;color:#000;letter-spacing:0.5px;line-height:20px;text-align:left">6 days</div>
<div class="t" style="left:145px;top:291px;width:20px;font:14.67px 'Liberation Serif',serif;color:#000;line-height:20px;text-align:right">5</div>
<div class="t" style="left:170px;top:291px;font:14.67px 'Liberation Serif',serif;color:#000;line-height:20px;text-align:left">2.1.1</div>
<svg style="position:absolute;left:168px;top:291px" width="6" height="6"><path d="M0 0h6L0 6z" fill="#107c10"/></svg>
<div class="t" style="left:257px;top:291px;font:14.67px 'Liberation Serif',serif;color:#000;line-height:20px;text-align:left">Kick-off meeting</div>
<div class="t" style="left:507px;top:291px;font:14.67px 'Liberation Serif',serif;color:#000;line-height:20px;text-align:left">Mon 03.01.22</div>
<div class="t" style="left:606px;top:291px;font:14.67px 'Liberation Serif',serif;color:#000;line-height:20px;text-align:left">Mon 03.01.22</div>
<div class="t" style="left:705px;top:291px;font:14.67px 'Liberation Serif',serif;color:#000;line-height:20px;text-align:left">1 day</div>
<div class="t" style="left:767px;top:291px;width:85px;height:19px;overflow:hidden;line-height:20px;"><div style="position:absolute;left:2px;top:0;font:14.67px 'Liberation Serif',serif;color:#000;line-height:20px;white-space:nowrap">Customer;Contractor</div></div>
<div class="t" style="left:853px;top:291px;width:59px;font:14.67px 'Liberation Serif',serif;color:#000;line-height:20px;text-align:right">1</div>
<div class="t" style="left:145px;top:311px;width:20px;font:14.67px 'Liberation Serif',serif;color:#000;line-height:20px;text-align:right">6</div>
<div class="t" style="left:170px;top:311px;font:14.67px 'Liberation Serif',serif;color:#000;line-height:20px;text-align:left">2.1.2</div>
<svg style="position:absolute;left:168px;top:311px" width="6" height="6"><path d="M0 0h6L0 6z" fill="#107c10"/></svg>
<div class="t" style="left:257px;top:311px;font:14.67px 'Liberation Serif',serif;color:#000;line-height:20px;text-align:left">Contract&#x27;s negotiations</div>
<div class="t" style="left:507px;top:311px;font:14.67px 'Liberation Serif',serif;color:#000;line-height:20px;text-align:left">Tue 04.01.22</div>
<div class="t" style="left:606px;top:311px;font:14.67px 'Liberation Serif',serif;color:#000;line-height:20px;text-align:left">Mon 10.01.22</div>
<div class="t" style="left:705px;top:311px;font:14.67px 'Liberation Serif',serif;color:#000;line-height:20px;text-align:left">5 days</div>
<div class="t" style="left:767px;top:311px;width:85px;height:19px;overflow:hidden;line-height:20px;"><div style="position:absolute;left:2px;top:0;font:14.67px 'Liberation Serif',serif;color:#000;line-height:20px;white-space:nowrap">Customer;Contractor</div></div>
<div class="t" style="left:853px;top:311px;width:59px;font:14.67px 'Liberation Serif',serif;color:#000;line-height:20px;text-align:right">5</div>
<div class="t" style="left:145px;top:331px;width:20px;font:14.67px 'Liberation Serif',serif;color:#000;line-height:20px;text-align:right">7</div>
<div class="t" style="left:170px;top:331px;font:14.67px 'Liberation Serif',serif;color:#000;line-height:20px;text-align:left">2.1.3</div>
<svg style="position:absolute;left:168px;top:331px" width="6" height="6"><path d="M0 0h6L0 6z" fill="#107c10"/></svg>
<div class="t" style="left:257px;top:331px;font:14.67px 'Liberation Serif',serif;color:#000;line-height:20px;text-align:left">Contract signed</div>
<div class="t" style="left:507px;top:331px;font:14.67px 'Liberation Serif',serif;color:#000;line-height:20px;text-align:left">Mon 10.01.22</div>
<div class="t" style="left:606px;top:331px;font:14.67px 'Liberation Serif',serif;color:#000;line-height:20px;text-align:left">Mon 10.01.22</div>
<div class="t" style="left:705px;top:331px;font:14.67px 'Liberation Serif',serif;color:#000;line-height:20px;text-align:left">0 days</div>
<div class="t" style="left:853px;top:331px;width:59px;font:14.67px 'Liberation Serif',serif;color:#000;line-height:20px;text-align:right">6</div>
<div class="t" style="left:145px;top:351px;width:20px;font:bold 14.67px 'Liberation Serif',serif;color:#000;line-height:20px;text-align:right">9</div>
<div class="t" style="left:170px;top:351px;font:bold 14.67px 'Liberation Serif',serif;color:#000;letter-spacing:0.5px;line-height:20px;text-align:left">2.2</div>
<div class="t" style="left:253px;top:351px;font:bold 14.67px 'Liberation Serif',serif;color:#000;letter-spacing:0px;line-height:20px;text-align:left">Planning and analysis</div>
<div class="t" style="left:507px;top:351px;font:bold 14.67px 'Liberation Serif',serif;color:#000;letter-spacing:0.5px;line-height:20px;text-align:left">Tue 11.01.22</div>
<div class="t" style="left:606px;top:351px;font:bold 14.67px 'Liberation Serif',serif;color:#000;letter-spacing:0.5px;line-height:20px;text-align:left">Wed 16.02.22</div>
<div class="t" style="left:705px;top:351px;font:bold 14.67px 'Liberation Serif',serif;color:#000;letter-spacing:0.5px;line-height:20px;text-align:left">27 days</div>
<div class="t" style="left:145px;top:371px;width:20px;font:14.67px 'Liberation Serif',serif;color:#000;line-height:20px;text-align:right">10</div>
<div class="t" style="left:170px;top:371px;font:14.67px 'Liberation Serif',serif;color:#000;line-height:20px;text-align:left">2.2.1</div>
<svg style="position:absolute;left:168px;top:371px" width="6" height="6"><path d="M0 0h6L0 6z" fill="#107c10"/></svg>
<div class="t" style="left:257px;top:371px;font:14.67px 'Liberation Serif',serif;color:#000;line-height:20px;text-align:left">Business-processes&#x27; examination</div>
<div class="t" style="left:507px;top:371px;font:14.67px 'Liberation Serif',serif;color:#000;line-height:20px;text-align:left">Tue 11.01.22</div>
<div class="t" style="left:606px;top:371px;font:14.67px 'Liberation Serif',serif;color:#000;line-height:20px;text-align:left">Mon 24.01.22</div>
<div class="t" style="left:705px;top:371px;font:14.67px 'Liberation Serif',serif;color:#000;line-height:20px;text-align:left">10 days</div>
<div class="t" style="left:767px;top:371px;width:85px;height:19px;overflow:hidden;line-height:20px;"><div style="position:absolute;left:2px;top:0;font:14.67px 'Liberation Serif',serif;color:#000;line-height:20px;white-space:nowrap">Contractor</div></div>
<div class="t" style="left:853px;top:371px;width:59px;font:14.67px 'Liberation Serif',serif;color:#000;line-height:20px;text-align:right">7</div>
<div class="t" style="left:145px;top:391px;width:20px;font:14.67px 'Liberation Serif',serif;color:#000;line-height:20px;text-align:right">11</div>
<div class="t" style="left:170px;top:391px;font:14.67px 'Liberation Serif',serif;color:#000;line-height:20px;text-align:left">2.2.2</div>
<svg style="position:absolute;left:168px;top:391px" width="6" height="6"><path d="M0 0h6L0 6z" fill="#107c10"/></svg>
<div class="t" style="left:257px;top:391px;font:14.67px 'Liberation Serif',serif;color:#000;line-height:20px;text-align:left">Creating a report</div>
<div class="t" style="left:507px;top:391px;font:14.67px 'Liberation Serif',serif;color:#000;line-height:20px;text-align:left">Tue 25.01.22</div>
<div class="t" style="left:606px;top:391px;font:14.67px 'Liberation Serif',serif;color:#000;line-height:20px;text-align:left">Mon 31.01.22</div>
<div class="t" style="left:705px;top:391px;font:14.67px 'Liberation Serif',serif;color:#000;line-height:20px;text-align:left">5 days</div>
<div class="t" style="left:767px;top:391px;width:85px;height:19px;overflow:hidden;line-height:20px;"><div style="position:absolute;left:2px;top:0;font:14.67px 'Liberation Serif',serif;color:#000;line-height:20px;white-space:nowrap">Contractor</div></div>
<div class="t" style="left:853px;top:391px;width:59px;font:14.67px 'Liberation Serif',serif;color:#000;line-height:20px;text-align:right">10</div>
<div class="t" style="left:145px;top:411px;width:20px;font:14.67px 'Liberation Serif',serif;color:#000;line-height:20px;text-align:right">12</div>
<div class="t" style="left:170px;top:411px;font:14.67px 'Liberation Serif',serif;color:#000;line-height:20px;text-align:left">2.2.3</div>
<svg style="position:absolute;left:168px;top:411px" width="6" height="6"><path d="M0 0h6L0 6z" fill="#107c10"/></svg>
<div class="t" style="left:257px;top:411px;font:14.67px 'Liberation Serif',serif;color:#000;line-height:20px;text-align:left">Report Delivery</div>
<div class="t" style="left:507px;top:411px;font:14.67px 'Liberation Serif',serif;color:#000;line-height:20px;text-align:left">Tue 01.02.22</div>
<div class="t" style="left:606px;top:411px;font:14.67px 'Liberation Serif',serif;color:#000;line-height:20px;text-align:left">Mon 07.02.22</div>
<div class="t" style="left:705px;top:411px;font:14.67px 'Liberation Serif',serif;color:#000;line-height:20px;text-align:left">5 days</div>
<div class="t" style="left:767px;top:411px;width:85px;height:19px;overflow:hidden;line-height:20px;"><div style="position:absolute;left:2px;top:0;font:14.67px 'Liberation Serif',serif;color:#000;line-height:20px;white-space:nowrap">Contractor</div></div>
<div class="t" style="left:853px;top:411px;width:59px;font:14.67px 'Liberation Serif',serif;color:#000;line-height:20px;text-align:right">11</div>
<div class="t" style="left:145px;top:431px;width:20px;font:14.67px 'Liberation Serif',serif;color:#000;line-height:20px;text-align:right">13</div>
<div class="t" style="left:170px;top:431px;font:14.67px 'Liberation Serif',serif;color:#000;line-height:20px;text-align:left">2.2.4</div>
<svg style="position:absolute;left:168px;top:431px" width="6" height="6"><path d="M0 0h6L0 6z" fill="#107c10"/></svg>
<div class="t" style="left:257px;top:431px;font:14.67px 'Liberation Serif',serif;color:#000;line-height:20px;text-align:left">Detailed shedule delivery</div>
<div class="t" style="left:507px;top:431px;font:14.67px 'Liberation Serif',serif;color:#000;line-height:20px;text-align:left">Tue 08.02.22</div>
<div class="t" style="left:606px;top:431px;font:14.67px 'Liberation Serif',serif;color:#000;line-height:20px;text-align:left">Mon 14.02.22</div>
<div class="t" style="left:705px;top:431px;font:14.67px 'Liberation Serif',serif;color:#000;line-height:20px;text-align:left">5 days</div>
<div class="t" style="left:767px;top:431px;width:85px;height:19px;overflow:hidden;line-height:20px;"><div style="position:absolute;left:2px;top:0;font:14.67px 'Liberation Serif',serif;color:#000;line-height:20px;white-space:nowrap">Contractor</div></div>
<div class="t" style="left:853px;top:431px;width:59px;font:14.67px 'Liberation Serif',serif;color:#000;line-height:20px;text-align:right">12</div>
<div class="t" style="left:145px;top:451px;width:20px;font:14.67px 'Liberation Serif',serif;color:#000;line-height:20px;text-align:right">14</div>
<div class="t" style="left:170px;top:451px;font:14.67px 'Liberation Serif',serif;color:#000;line-height:20px;text-align:left">2.2.5</div>
<svg style="position:absolute;left:168px;top:451px" width="6" height="6"><path d="M0 0h6L0 6z" fill="#107c10"/></svg>
<div class="t" style="left:257px;top:451px;font:14.67px 'Liberation Serif',serif;color:#000;line-height:20px;text-align:left">Project charter delivery</div>
<div class="t" style="left:507px;top:451px;font:14.67px 'Liberation Serif',serif;color:#000;line-height:20px;text-align:left">Tue 08.02.22</div>
<div class="t" style="left:606px;top:451px;font:14.67px 'Liberation Serif',serif;color:#000;line-height:20px;text-align:left">Wed 16.02.22</div>
<div class="t" style="left:705px;top:451px;font:14.67px 'Liberation Serif',serif;color:#000;line-height:20px;text-align:left">7 days</div>
<div class="t" style="left:767px;top:451px;width:85px;height:19px;overflow:hidden;line-height:20px;"><div style="position:absolute;left:2px;top:0;font:14.67px 'Liberation Serif',serif;color:#000;line-height:20px;white-space:nowrap">Contractor</div></div>
<div class="t" style="left:853px;top:451px;width:59px;font:14.67px 'Liberation Serif',serif;color:#000;line-height:20px;text-align:right">12</div>
<div class="t" style="left:145px;top:471px;width:20px;font:14.67px 'Liberation Serif',serif;color:#000;line-height:20px;text-align:right">15</div>
<div class="t" style="left:170px;top:471px;font:14.67px 'Liberation Serif',serif;color:#000;line-height:20px;text-align:left">2.2.6</div>
<svg style="position:absolute;left:168px;top:471px" width="6" height="6"><path d="M0 0h6L0 6z" fill="#107c10"/></svg>
<div class="t" style="left:257px;top:471px;font:14.67px 'Liberation Serif',serif;color:#000;line-height:20px;text-align:left">Planning and analysis phase completed</div>
<div class="t" style="left:507px;top:471px;font:14.67px 'Liberation Serif',serif;color:#000;line-height:20px;text-align:left">Wed 16.02.22</div>
<div class="t" style="left:606px;top:471px;font:14.67px 'Liberation Serif',serif;color:#000;line-height:20px;text-align:left">Wed 16.02.22</div>
<div class="t" style="left:705px;top:471px;font:14.67px 'Liberation Serif',serif;color:#000;line-height:20px;text-align:left">0 days</div>
<div class="t" style="left:856px;top:471px;font:14.67px 'Liberation Serif',serif;color:#000;letter-spacing:-0.3px;line-height:20px;text-align:left">11;12;13;14</div>
<div class="t" style="left:145px;top:491px;width:20px;font:bold 14.67px 'Liberation Serif',serif;color:#000;line-height:20px;text-align:right">17</div>
<div class="t" style="left:170px;top:491px;font:bold 14.67px 'Liberation Serif',serif;color:#000;letter-spacing:0.5px;line-height:20px;text-align:left">2.3</div>
<div class="t" style="left:253px;top:491px;font:bold 14.67px 'Liberation Serif',serif;color:#000;letter-spacing:0.65px;line-height:20px;text-align:left">Development</div>
<div class="t" style="left:507px;top:491px;font:bold 14.67px 'Liberation Serif',serif;color:#000;letter-spacing:0.5px;line-height:20px;text-align:left">Thu 17.02.22</div>
<div class="t" style="left:606px;top:491px;font:bold 14.67px 'Liberation Serif',serif;color:#000;letter-spacing:0.5px;line-height:20px;text-align:left">Tue 22.03.22</div>
<div class="t" style="left:705px;top:491px;font:bold 14.67px 'Liberation Serif',serif;color:#000;letter-spacing:0.5px;line-height:20px;text-align:left">24 days?</div>
<div class="t" style="left:145px;top:511px;width:20px;font:14.67px 'Liberation Serif',serif;color:#000;line-height:20px;text-align:right">18</div>
<div class="t" style="left:170px;top:511px;font:14.67px 'Liberation Serif',serif;color:#000;line-height:20px;text-align:left">2.3.1</div>
<svg style="position:absolute;left:168px;top:511px" width="6" height="6"><path d="M0 0h6L0 6z" fill="#107c10"/></svg>
<div class="t" style="left:257px;top:511px;font:14.67px 'Liberation Serif',serif;color:#000;line-height:20px;text-align:left">Infrastructure preparation</div>
<div class="t" style="left:507px;top:511px;font:14.67px 'Liberation Serif',serif;color:#000;line-height:20px;text-align:left">Thu 17.02.22</div>
<div class="t" style="left:606px;top:511px;font:14.67px 'Liberation Serif',serif;color:#000;line-height:20px;text-align:left">Fri 25.02.22</div>
<div class="t" style="left:705px;top:511px;font:14.67px 'Liberation Serif',serif;color:#000;line-height:20px;text-align:left">7 days</div>
<div class="t" style="left:767px;top:511px;width:85px;height:19px;overflow:hidden;line-height:20px;"><div style="position:absolute;left:2px;top:0;font:14.67px 'Liberation Serif',serif;color:#000;line-height:20px;white-space:nowrap">Customer</div></div>
<div class="t" style="left:853px;top:511px;width:59px;font:14.67px 'Liberation Serif',serif;color:#000;line-height:20px;text-align:right">15</div>
<div class="t" style="left:145px;top:531px;width:20px;font:14.67px 'Liberation Serif',serif;color:#000;line-height:20px;text-align:right">19</div>
<div class="t" style="left:170px;top:531px;font:14.67px 'Liberation Serif',serif;color:#000;line-height:20px;text-align:left">2.3.2</div>
<svg style="position:absolute;left:168px;top:531px" width="6" height="6"><path d="M0 0h6L0 6z" fill="#107c10"/></svg>
<div class="t" style="left:257px;top:531px;font:14.67px 'Liberation Serif',serif;color:#000;line-height:20px;text-align:left">Infrastructure ready</div>
<div class="t" style="left:507px;top:531px;font:14.67px 'Liberation Serif',serif;color:#000;line-height:20px;text-align:left">Mon 28.02.22</div>
<div class="t" style="left:606px;top:531px;font:14.67px 'Liberation Serif',serif;color:#000;line-height:20px;text-align:left">Mon 28.02.22</div>
<div class="t" style="left:705px;top:531px;font:14.67px 'Liberation Serif',serif;color:#000;line-height:20px;text-align:left">1 day?</div>
<div class="t" style="left:853px;top:531px;width:59px;font:14.67px 'Liberation Serif',serif;color:#000;line-height:20px;text-align:right">18</div>
<div class="t" style="left:145px;top:551px;width:20px;font:bold 14.67px 'Liberation Serif',serif;color:#000;line-height:20px;text-align:right">20</div>
<div class="t" style="left:170px;top:551px;font:bold 14.67px 'Liberation Serif',serif;color:#000;letter-spacing:0.5px;line-height:20px;text-align:left">2.3.3</div>
<svg style="position:absolute;left:168px;top:551px" width="6" height="6"><path d="M0 0h6L0 6z" fill="#107c10"/></svg>
<div class="t" style="left:257px;top:551px;font:bold 14.67px 'Liberation Serif',serif;color:#000;letter-spacing:0.15px;line-height:20px;text-align:left">Coding and initial testing</div>
<div class="t" style="left:507px;top:551px;font:bold 14.67px 'Liberation Serif',serif;color:#000;letter-spacing:0.5px;line-height:20px;text-align:left">Thu 17.02.22</div>
<div class="t" style="left:606px;top:551px;font:bold 14.67px 'Liberation Serif',serif;color:#000;letter-spacing:0.5px;line-height:20px;text-align:left">Tue 22.03.22</div>
<div class="t" style="left:705px;top:551px;font:bold 14.67px 'Liberation Serif',serif;color:#000;letter-spacing:0.5px;line-height:20px;text-align:left">24 days</div>
<div class="t" style="left:145px;top:571px;width:20px;font:bold 14.67px 'Liberation Serif',serif;color:#000;line-height:20px;text-align:right">21</div>
<div class="t" style="left:170px;top:571px;font:bold 14.67px 'Liberation Serif',serif;color:#000;letter-spacing:0.5px;line-height:20px;text-align:left">2.3.3.1</div>
<div class="t" style="left:261px;top:571px;font:bold 14.67px 'Liberation Serif',serif;color:#000;letter-spacing:0.27px;line-height:20px;text-align:left">Subsystem 1</div>
<div class="t" style="left:507px;top:571px;font:bold 14.67px 'Liberation Serif',serif;color:#000;letter-spacing:0.5px;line-height:20px;text-align:left">Thu 17.02.22</div>
<div class="t" style="left:606px;top:571px;font:bold 14.67px 'Liberation Serif',serif;color:#000;letter-spacing:0.5px;line-height:20px;text-align:left">Fri 18.03.22</div>
<div class="t" style="left:705px;top:571px;font:bold 14.67px 'Liberation Serif',serif;color:#000;letter-spacing:0.5px;line-height:20px;text-align:left">22 days</div>
<div class="t" style="left:145px;top:591px;width:20px;font:bold 14.67px 'Liberation Serif',serif;color:#000;line-height:20px;text-align:right">22</div>
<div class="t" style="left:170px;top:591px;font:bold 14.67px 'Liberation Serif',serif;color:#000;letter-spacing:0.5px;line-height:20px;text-align:left">2.3.3.1.1</div>
<div class="t" style="left:265px;top:591px;font:bold 14.67px 'Liberation Serif',serif;color:#000;letter-spacing:0.34px;line-height:20px;text-align:left">Module 1</div>
<div class="t" style="left:507px;top:591px;font:bold 14.67px 'Liberation Serif',serif;color:#000;letter-spacing:0.5px;line-height:20px;text-align:left">Thu 17.02.22</div>
<div class="t" style="left:606px;top:591px;font:bold 14.67px 'Liberation Serif',serif;color:#000;letter-spacing:0.5px;line-height:20px;text-align:left">Mon 07.03.22</div>
<div class="t" style="left:705px;top:591px;font:bold 14.67px 'Liberation Serif',serif;color:#000;letter-spacing:0.5px;line-height:20px;text-align:left">13 days</div>
<div class="t" style="left:145px;top:611px;width:20px;font:14.67px 'Liberation Serif',serif;color:#000;line-height:20px;text-align:right">23</div>
<div class="t" style="left:170px;top:611px;font:14.67px 'Liberation Serif',serif;color:#000;line-height:20px;text-align:left">2.3.3.1.1.1</div>
<div class="t" style="left:269px;top:611px;font:14.67px 'Liberation Serif',serif;color:#000;line-height:20px;text-align:left">Coding</div>
<div class="t" style="left:507px;top:611px;font:14.67px 'Liberation Serif',serif;color:#000;line-height:20px;text-align:left">Thu 17.02.22</div>
<div class="t" style="left:606px;top:611px;font:14.67px 'Liberation Serif',serif;color:#000;line-height:20px;text-align:left">Wed 02.03.22</div>
<div class="t" style="left:705px;top:611px;font:14.67px 'Liberation Serif',serif;color:#000;line-height:20px;text-align:left">10 days</div>
<div class="t" style="left:767px;top:611px;width:85px;height:19px;overflow:hidden;line-height:20px;"><div style="position:absolute;left:2px;top:0;font:14.67px 'Liberation Serif',serif;color:#000;line-height:20px;white-space:nowrap">Developer 1</div></div>
<div class="t" style="left:853px;top:611px;width:59px;font:14.67px 'Liberation Serif',serif;color:#000;line-height:20px;text-align:right">15</div>
<div class="t" style="left:145px;top:631px;width:20px;font:14.67px 'Liberation Serif',serif;color:#000;line-height:20px;text-align:right">24</div>
<div class="t" style="left:170px;top:631px;font:14.67px 'Liberation Serif',serif;color:#000;line-height:20px;text-align:left">2.3.3.1.1.2</div>
<div class="t" style="left:269px;top:631px;font:14.67px 'Liberation Serif',serif;color:#000;line-height:20px;text-align:left">Testing</div>
<div class="t" style="left:507px;top:631px;font:14.67px 'Liberation Serif',serif;color:#000;line-height:20px;text-align:left">Thu 03.03.22</div>
<div class="t" style="left:606px;top:631px;font:14.67px 'Liberation Serif',serif;color:#000;line-height:20px;text-align:left">Mon 07.03.22</div>
<div class="t" style="left:705px;top:631px;font:14.67px 'Liberation Serif',serif;color:#000;line-height:20px;text-align:left">3 days</div>
<div class="t" style="left:767px;top:631px;width:85px;height:19px;overflow:hidden;line-height:20px;"><div style="position:absolute;left:2px;top:0;font:14.67px 'Liberation Serif',serif;color:#000;line-height:20px;white-space:nowrap">Developer 1</div></div>
<div class="t" style="left:853px;top:631px;width:59px;font:14.67px 'Liberation Serif',serif;color:#000;line-height:20px;text-align:right">23</div>
<div class="t" style="left:145px;top:651px;width:20px;font:bold 14.67px 'Liberation Serif',serif;color:#000;line-height:20px;text-align:right">25</div>
<div class="t" style="left:170px;top:651px;font:bold 14.67px 'Liberation Serif',serif;color:#000;letter-spacing:0.5px;line-height:20px;text-align:left">2.3.3.1.2</div>
<div class="t" style="left:265px;top:651px;font:bold 14.67px 'Liberation Serif',serif;color:#000;letter-spacing:0.34px;line-height:20px;text-align:left">Module 2</div>
<div class="t" style="left:507px;top:651px;font:bold 14.67px 'Liberation Serif',serif;color:#000;letter-spacing:0.5px;line-height:20px;text-align:left">Tue 08.03.22</div>
<div class="t" style="left:606px;top:651px;font:bold 14.67px 'Liberation Serif',serif;color:#000;letter-spacing:0.5px;line-height:20px;text-align:left">Fri 18.03.22</div>
<div class="t" style="left:705px;top:651px;font:bold 14.67px 'Liberation Serif',serif;color:#000;letter-spacing:0.5px;line-height:20px;text-align:left">9 days</div>
<div class="t" style="left:145px;top:671px;width:20px;font:14.67px 'Liberation Serif',serif;color:#000;line-height:20px;text-align:right">26</div>
<div class="t" style="left:170px;top:671px;font:14.67px 'Liberation Serif',serif;color:#000;line-height:20px;text-align:left">2.3.3.1.2.1</div>
<div class="t" style="left:269px;top:671px;font:14.67px 'Liberation Serif',serif;color:#000;line-height:20px;text-align:left">Coding</div>
<div class="t" style="left:507px;top:671px;font:14.67px 'Liberation Serif',serif;color:#000;line-height:20px;text-align:left">Tue 08.03.22</div>
<div class="t" style="left:606px;top:671px;font:14.67px 'Liberation Serif',serif;color:#000;line-height:20px;text-align:left">Wed 16.03.22</div>
<div class="t" style="left:705px;top:671px;font:14.67px 'Liberation Serif',serif;color:#000;line-height:20px;text-align:left">7 days</div>
<div class="t" style="left:767px;top:671px;width:85px;height:19px;overflow:hidden;line-height:20px;"><div style="position:absolute;left:2px;top:0;font:14.67px 'Liberation Serif',serif;color:#000;line-height:20px;white-space:nowrap">Developer 1</div></div>
<div class="t" style="left:853px;top:671px;width:59px;font:14.67px 'Liberation Serif',serif;color:#000;line-height:20px;text-align:right">24</div>
<div class="t" style="left:145px;top:691px;width:20px;font:14.67px 'Liberation Serif',serif;color:#000;line-height:20px;text-align:right">27</div>
<div class="t" style="left:170px;top:691px;font:14.67px 'Liberation Serif',serif;color:#000;line-height:20px;text-align:left">2.3.3.1.2.2</div>
<div class="t" style="left:269px;top:691px;font:14.67px 'Liberation Serif',serif;color:#000;line-height:20px;text-align:left">Testing</div>
<div class="t" style="left:507px;top:691px;font:14.67px 'Liberation Serif',serif;color:#000;line-height:20px;text-align:left">Thu 17.03.22</div>
<div class="t" style="left:606px;top:691px;font:14.67px 'Liberation Serif',serif;color:#000;line-height:20px;text-align:left">Fri 18.03.22</div>
<div class="t" style="left:705px;top:691px;font:14.67px 'Liberation Serif',serif;color:#000;line-height:20px;text-align:left">2 days</div>
<div class="t" style="left:767px;top:691px;width:85px;height:19px;overflow:hidden;line-height:20px;"><div style="position:absolute;left:2px;top:0;font:14.67px 'Liberation Serif',serif;color:#000;line-height:20px;white-space:nowrap">Developer 1</div></div>
<div class="t" style="left:853px;top:691px;width:59px;font:14.67px 'Liberation Serif',serif;color:#000;line-height:20px;text-align:right">26</div>
<div class="t" style="left:145px;top:711px;width:20px;font:bold 14.67px 'Liberation Serif',serif;color:#000;line-height:20px;text-align:right">28</div>
<div class="t" style="left:170px;top:711px;font:bold 14.67px 'Liberation Serif',serif;color:#000;letter-spacing:0.5px;line-height:20px;text-align:left">2.3.3.2</div>
<div class="t" style="left:261px;top:711px;font:bold 14.67px 'Liberation Serif',serif;color:#000;letter-spacing:0.27px;line-height:20px;text-align:left">Subsystem 2</div>
<div class="t" style="left:507px;top:711px;font:bold 14.67px 'Liberation Serif',serif;color:#000;letter-spacing:0.5px;line-height:20px;text-align:left">Thu 17.02.22</div>
<div class="t" style="left:606px;top:711px;font:bold 14.67px 'Liberation Serif',serif;color:#000;letter-spacing:0.5px;line-height:20px;text-align:left">Tue 22.03.22</div>
<div class="t" style="left:705px;top:711px;font:bold 14.67px 'Liberation Serif',serif;color:#000;letter-spacing:0.5px;line-height:20px;text-align:left">24 days</div>
<div class="t" style="left:145px;top:731px;width:20px;font:bold 14.67px 'Liberation Serif',serif;color:#000;line-height:20px;text-align:right">29</div>
<div class="t" style="left:170px;top:731px;font:bold 14.67px 'Liberation Serif',serif;color:#000;letter-spacing:0.5px;line-height:20px;text-align:left">2.3.3.2.1</div>
<div class="t" style="left:265px;top:731px;font:bold 14.67px 'Liberation Serif',serif;color:#000;letter-spacing:0.34px;line-height:20px;text-align:left">Module 3</div>
<div class="t" style="left:507px;top:731px;font:bold 14.67px 'Liberation Serif',serif;color:#000;letter-spacing:0.5px;line-height:20px;text-align:left">Thu 17.02.22</div>
<div class="t" style="left:606px;top:731px;font:bold 14.67px 'Liberation Serif',serif;color:#000;letter-spacing:0.5px;line-height:20px;text-align:left">Tue 01.03.22</div>
<div class="t" style="left:705px;top:731px;font:bold 14.67px 'Liberation Serif',serif;color:#000;letter-spacing:0.5px;line-height:20px;text-align:left">9 days</div>
<div class="t" style="left:145px;top:751px;width:20px;font:14.67px 'Liberation Serif',serif;color:#000;line-height:20px;text-align:right">30</div>
<div class="t" style="left:170px;top:751px;font:14.67px 'Liberation Serif',serif;color:#000;line-height:20px;text-align:left">2.3.3.2.1.1</div>
<div class="t" style="left:269px;top:751px;font:14.67px 'Liberation Serif',serif;color:#000;line-height:20px;text-align:left">Coding</div>
<div class="t" style="left:507px;top:751px;font:14.67px 'Liberation Serif',serif;color:#000;line-height:20px;text-align:left">Thu 17.02.22</div>
<div class="t" style="left:606px;top:751px;font:14.67px 'Liberation Serif',serif;color:#000;line-height:20px;text-align:left">Mon 28.02.22</div>
<div class="t" style="left:705px;top:751px;font:14.67px 'Liberation Serif',serif;color:#000;line-height:20px;text-align:left">8 days</div>
<div class="t" style="left:767px;top:751px;width:85px;height:19px;overflow:hidden;line-height:20px;"><div style="position:absolute;left:2px;top:0;font:14.67px 'Liberation Serif',serif;color:#000;line-height:20px;white-space:nowrap">Developer 2</div></div>
<div class="t" style="left:853px;top:751px;width:59px;font:14.67px 'Liberation Serif',serif;color:#000;line-height:20px;text-align:right">15</div>
<div class="t" style="left:145px;top:771px;width:20px;font:14.67px 'Liberation Serif',serif;color:#000;line-height:20px;text-align:right">31</div>
<div class="t" style="left:170px;top:771px;font:14.67px 'Liberation Serif',serif;color:#000;line-height:20px;text-align:left">2.3.3.2.1.2</div>
<div class="t" style="left:269px;top:771px;font:14.67px 'Liberation Serif',serif;color:#000;line-height:20px;text-align:left">Testing</div>
<div class="t" style="left:507px;top:771px;font:14.67px 'Liberation Serif',serif;color:#000;line-height:20px;text-align:left">Tue 01.03.22</div>
<div class="t" style="left:606px;top:771px;font:14.67px 'Liberation Serif',serif;color:#000;line-height:20px;text-align:left">Tue 01.03.22</div>
<div class="t" style="left:705px;top:771px;font:14.67px 'Liberation Serif',serif;color:#000;line-height:20px;text-align:left">1 day</div>
<div class="t" style="left:767px;top:771px;width:85px;height:19px;overflow:hidden;line-height:20px;"><div style="position:absolute;left:2px;top:0;font:14.67px 'Liberation Serif',serif;color:#000;line-height:20px;white-space:nowrap">Developer 2</div></div>
<div class="t" style="left:853px;top:771px;width:59px;font:14.67px 'Liberation Serif',serif;color:#000;line-height:20px;text-align:right">30</div>
<div class="t" style="left:145px;top:791px;width:20px;font:bold 14.67px 'Liberation Serif',serif;color:#000;line-height:20px;text-align:right">32</div>
<div class="t" style="left:170px;top:791px;font:bold 14.67px 'Liberation Serif',serif;color:#000;letter-spacing:0.5px;line-height:20px;text-align:left">2.3.3.2.2</div>
<div class="t" style="left:265px;top:791px;font:bold 14.67px 'Liberation Serif',serif;color:#000;letter-spacing:0.34px;line-height:20px;text-align:left">Module 4</div>
<div class="t" style="left:507px;top:791px;font:bold 14.67px 'Liberation Serif',serif;color:#000;letter-spacing:0.5px;line-height:20px;text-align:left">Wed 02.03.22</div>
<div class="t" style="left:606px;top:791px;font:bold 14.67px 'Liberation Serif',serif;color:#000;letter-spacing:0.5px;line-height:20px;text-align:left">Tue 22.03.22</div>
<div class="t" style="left:705px;top:791px;font:bold 14.67px 'Liberation Serif',serif;color:#000;letter-spacing:0.5px;line-height:20px;text-align:left">15 days</div>
<div style="left:2px;top:131px;width:19px;height:19px;border:1px solid #7b8491;box-sizing:border-box;background:#e6e6e6"></div>
<div class="t" style="left:2px;top:131px;width:19px;font:11.5px 'Liberation Sans',sans-serif;color:#505050;line-height:20px;text-align:center">1</div>
<div style="left:21px;top:131px;width:19px;height:19px;border:1px solid #7b8491;box-sizing:border-box;background:#e6e6e6"></div>
<div class="t" style="left:21px;top:131px;width:19px;font:11.5px 'Liberation Sans',sans-serif;color:#505050;line-height:20px;text-align:center">2</div>
<div style="left:40px;top:131px;width:19px;height:19px;border:1px solid #7b8491;box-sizing:border-box;background:#e6e6e6"></div>
<div class="t" style="left:40px;top:131px;width:19px;font:11.5px 'Liberation Sans',sans-serif;color:#505050;line-height:20px;text-align:center">3</div>
<div style="left:59px;top:131px;width:19px;height:19px;border:1px solid #7b8491;box-sizing:border-box;background:#e6e6e6"></div>
<div class="t" style="left:59px;top:131px;width:19px;font:11.5px 'Liberation Sans',sans-serif;color:#505050;line-height:20px;text-align:center">4</div>
<div style="left:78px;top:131px;width:19px;height:19px;border:1px solid #7b8491;box-sizing:border-box;background:#e6e6e6"></div>
<div class="t" style="left:78px;top:131px;width:19px;font:11.5px 'Liberation Sans',sans-serif;color:#505050;line-height:20px;text-align:center">5</div>
<div style="left:97px;top:131px;width:19px;height:19px;border:1px solid #7b8491;box-sizing:border-box;background:#e6e6e6"></div>
<div class="t" style="left:97px;top:131px;width:19px;font:11.5px 'Liberation Sans',sans-serif;color:#505050;line-height:20px;text-align:center">6</div>
<div style="left:2px;top:251px;width:19px;height:19px;border:1px solid #7b8491;box-sizing:border-box;background:#e6e6e6"></div>
<div style="left:8px;top:260px;width:8px;height:2px;background:#555"></div>
<div style="left:8px;top:270px;width:2px;height:540px;background:#9a9a9a"></div>
<div style="left:21px;top:271px;width:19px;height:19px;border:1px solid #7b8491;box-sizing:border-box;background:#e6e6e6"></div>
<div style="left:27px;top:280px;width:8px;height:2px;background:#555"></div>
<div style="left:27px;top:290px;width:2px;height:60px;background:#9a9a9a"></div>
<div style="left:27px;top:348px;width:6px;height:2px;background:#9a9a9a"></div>
<div style="left:21px;top:351px;width:19px;height:19px;border:1px solid #7b8491;box-sizing:border-box;background:#e6e6e6"></div>
<div style="left:27px;top:360px;width:8px;height:2px;background:#555"></div>
<div style="left:27px;top:370px;width:2px;height:120px;background:#9a9a9a"></div>
<div style="left:27px;top:488px;width:6px;height:2px;background:#9a9a9a"></div>
<div style="left:21px;top:491px;width:19px;height:19px;border:1px solid #7b8491;box-sizing:border-box;background:#e6e6e6"></div>
<div style="left:27px;top:500px;width:8px;height:2px;background:#555"></div>
<div style="left:27px;top:510px;width:2px;height:300px;background:#9a9a9a"></div>
<div style="left:40px;top:551px;width:19px;height:19px;border:1px solid #7b8491;box-sizing:border-box;background:#e6e6e6"></div>
<div style="left:46px;top:560px;width:8px;height:2px;background:#555"></div>
<div style="left:46px;top:570px;width:2px;height:240px;background:#9a9a9a"></div>
<div style="left:59px;top:571px;width:19px;height:19px;border:1px solid #7b8491;box-sizing:border-box;background:#e6e6e6"></div>
<div style="left:65px;top:580px;width:8px;height:2px;background:#555"></div>
<div style="left:65px;top:590px;width:2px;height:120px;background:#9a9a9a"></div>
<div style="left:65px;top:708px;width:6px;height:2px;background:#9a9a9a"></div>
<div style="left:78px;top:591px;width:19px;height:19px;border:1px solid #7b8491;box-sizing:border-box;background:#e6e6e6"></div>
<div style="left:84px;top:600px;width:8px;height:2px;background:#555"></div>
<div style="left:84px;top:610px;width:2px;height:40px;background:#9a9a9a"></div>
<div style="left:84px;top:648px;width:6px;height:2px;background:#9a9a9a"></div>
<div style="left:78px;top:651px;width:19px;height:19px;border:1px solid #7b8491;box-sizing:border-box;background:#e6e6e6"></div>
<div style="left:84px;top:660px;width:8px;height:2px;background:#555"></div>
<div style="left:84px;top:670px;width:2px;height:40px;background:#9a9a9a"></div>
<div style="left:84px;top:708px;width:6px;height:2px;background:#9a9a9a"></div>
<div style="left:59px;top:711px;width:19px;height:19px;border:1px solid #7b8491;box-sizing:border-box;background:#e6e6e6"></div>
<div style="left:65px;top:720px;width:8px;height:2px;background:#555"></div>
<div style="left:65px;top:730px;width:2px;height:80px;background:#9a9a9a"></div>
<div style="left:78px;top:731px;width:19px;height:19px;border:1px solid #7b8491;box-sizing:border-box;background:#e6e6e6"></div>
<div style="left:84px;top:740px;width:8px;height:2px;background:#555"></div>
<div style="left:84px;top:750px;width:2px;height:40px;background:#9a9a9a"></div>
<div style="left:84px;top:788px;width:6px;height:2px;background:#9a9a9a"></div>
<div style="left:78px;top:791px;width:19px;height:19px;border:1px solid #7b8491;box-sizing:border-box;background:#e6e6e6"></div>
<div style="left:84px;top:800px;width:8px;height:2px;background:#555"></div>
<div style="left:45.5px;top:300px;width:2px;height:2px;background:#9a9a9a"></div>
<div style="left:45.5px;top:320px;width:2px;height:2px;background:#9a9a9a"></div>
<div style="left:45.5px;top:340px;width:2px;height:2px;background:#9a9a9a"></div>
<div style="left:45.5px;top:380px;width:2px;height:2px;background:#9a9a9a"></div>
<div style="left:45.5px;top:400px;width:2px;height:2px;background:#9a9a9a"></div>
<div style="left:45.5px;top:420px;width:2px;height:2px;background:#9a9a9a"></div>
<div style="left:45.5px;top:440px;width:2px;height:2px;background:#9a9a9a"></div>
<div style="left:45.5px;top:460px;width:2px;height:2px;background:#9a9a9a"></div>
<div style="left:45.5px;top:480px;width:2px;height:2px;background:#9a9a9a"></div>
<div style="left:45.5px;top:520px;width:2px;height:2px;background:#9a9a9a"></div>
<div style="left:45.5px;top:540px;width:2px;height:2px;background:#9a9a9a"></div>
<div style="left:102.5px;top:620px;width:2px;height:2px;background:#9a9a9a"></div>
<div style="left:102.5px;top:640px;width:2px;height:2px;background:#9a9a9a"></div>
<div style="left:102.5px;top:680px;width:2px;height:2px;background:#9a9a9a"></div>
<div style="left:102.5px;top:700px;width:2px;height:2px;background:#9a9a9a"></div>
<div style="left:102.5px;top:760px;width:2px;height:2px;background:#9a9a9a"></div>
<div style="left:102.5px;top:780px;width:2px;height:2px;background:#9a9a9a"></div>
<div style="left:1582px;top:133px;width:15px;height:677px;background:#dadada"></div>
<div style="left:1582px;top:133px;width:15px;height:15px;background:#fff;border:1px solid #ababab;box-sizing:border-box"></div>
<svg style="position:absolute;left:1585px;top:137px" width="10" height="6"><path d="M0.5 5.5L4.75 1 9 5.5z" fill="#8a8a8a"/></svg>
<div style="left:1582px;top:148px;width:15px;height:390px;background:#fff;border:1px solid #ababab;box-sizing:border-box"></div>
<div style="left:1582px;top:795px;width:15px;height:15px;background:#fff;border:1px solid #ababab;box-sizing:border-box"></div>
<svg style="position:absolute;left:1585px;top:800px" width="10" height="6"><path d="M0.5 0.5L4.75 5 9 0.5z" fill="#707070"/></svg>
<div style="left:0px;top:811px;width:1598px;height:27px;background:#e6e6e6"></div>
<svg style="position:absolute;left:20px;top:815px" width="50" height="18"><path d="M11 5l-4 4 4 4z" fill="#bdbdbd"/><path d="M35 5l4 4-4 4z" fill="#bdbdbd"/></svg>
<div style="left:100px;top:810px;width:65px;height:26px;background:#fff;border-left:1px solid #c6c6c6;border-right:1px solid #c6c6c6;box-sizing:border-box"></div>
<div style="left:100px;top:833px;width:65px;height:2px;background:#217346"></div>
<div class="t" style="left:100px;top:813.5px;width:65px;font:bold 12.5px 'Liberation Sans',sans-serif;color:#217346;line-height:20px;text-align:center">Sheet1</div>
<svg style="position:absolute;left:196px;top:814px" width="20" height="20"><circle cx="10" cy="9.5" r="7.5" fill="none" stroke="#7a7a7a" stroke-width="1.1"/><path d="M10 5.5v8M6 9.5h8" stroke="#555" stroke-width="1.4"/></svg>
<svg style="position:absolute;left:959px;top:818px" width="4" height="14"><circle cx="2" cy="2" r="0.9" fill="#9a9a9a"/><circle cx="2" cy="6" r="0.9" fill="#9a9a9a"/><circle cx="2" cy="10" r="0.9" fill="#9a9a9a"/></svg>
<div style="left:977px;top:817px;width:600px;height:15px;background:#dadada"></div>
<div style="left:977px;top:817px;width:15px;height:15px;background:#fff;border:1px solid #ababab;box-sizing:border-box"></div>
<svg style="position:absolute;left:981px;top:820px" width="8" height="10"><path d="M5.5 1.5v7L1.5 5z" fill="#666"/></svg>
<div style="left:991px;top:817px;width:368px;height:15px;background:#fff;border:1px solid #ababab;box-sizing:border-box"></div>
<div style="left:1562px;top:817px;width:15px;height:15px;background:#fff;border:1px solid #ababab;box-sizing:border-box"></div>
<svg style="position:absolute;left:1566px;top:820px" width="8" height="10"><path d="M2 1.5v7L6 5z" fill="#666"/></svg>
<div style="left:1297px;top:839px;width:40px;height:16px;background:#c8c6c4"></div>
<svg style="position:absolute;left:1290px;top:839px" width="308" height="17"><g fill="none" stroke="#3b3b3b" stroke-width="1.1">
<rect x="20.5" y="3.5" width="13" height="13"/><path d="M24.8 3.5v13M29.2 3.5v13M20.5 7.8h13M20.5 12.2h13"/>
<rect x="60.5" y="3.5" width="13" height="13"/><path d="M63 6.5h8M63 9h8M63 11.5h8M63 14h8"/>
<rect x="100.5" y="3.5" width="13" height="13"/><path d="M104.5 3.5v6h5v-6M100.5 9.5h4"/>
<path d="M133 11h8" stroke-width="1.3"/><path d="M146 11h100" stroke="#9a9a9a" stroke-width="1"/>
<path d="M251 11h8M255 7v8" stroke-width="1.3"/>
</g><rect x="194" y="5" width="5" height="12" fill="#6b6b6b"/></svg>
<div class="t" style="left:1563px;top:841px;font:11px 'Liberation Sans',sans-serif;color:#444;line-height:17px;text-align:left">100 %</div>
</body></html>
